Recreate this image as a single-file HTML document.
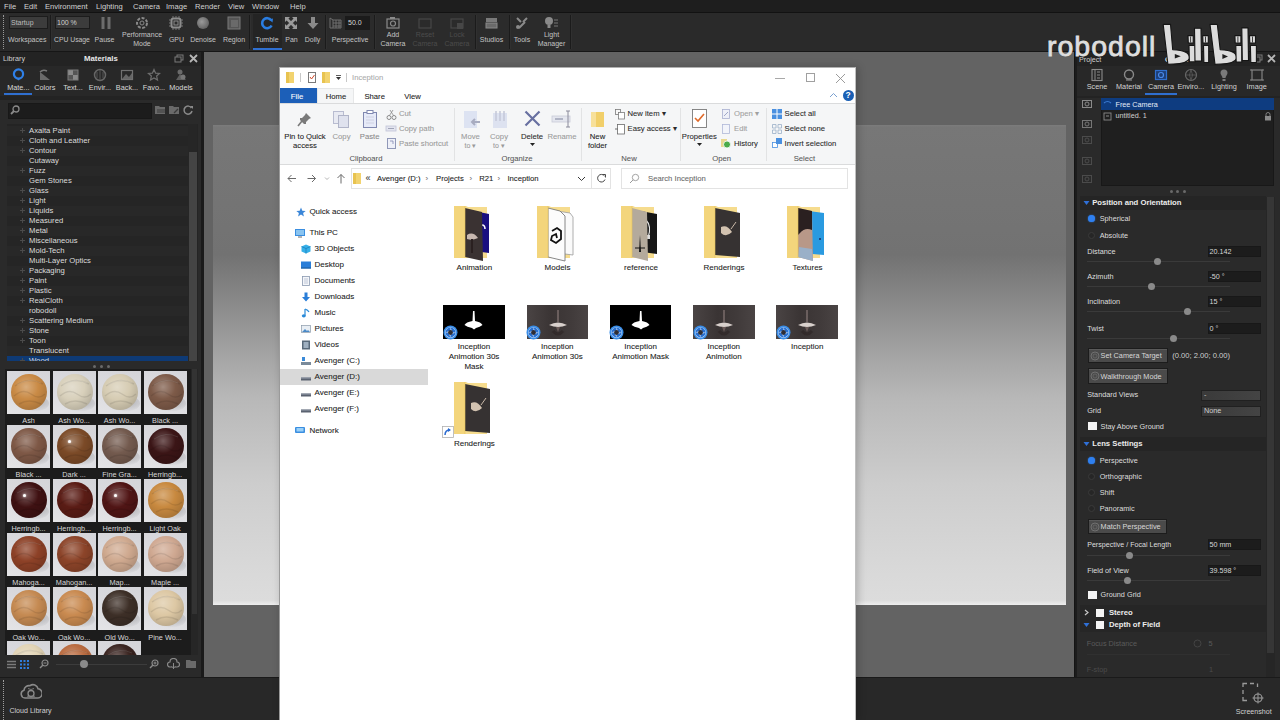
<!DOCTYPE html>
<html><head><meta charset="utf-8">
<style>
*{box-sizing:border-box;margin:0;padding:0}
html,body{width:1280px;height:720px;overflow:hidden;background:#262626;font-family:"Liberation Sans",sans-serif;position:relative}
.a{position:absolute}
.t{position:absolute;white-space:nowrap;line-height:1}
.c{position:absolute;white-space:nowrap;line-height:1;transform:translateX(-50%);text-align:center}
#menu{left:0;top:0;width:1280px;height:12px;background:#1e1e1e}
#menu span{position:absolute;top:2px;font-size:7.6px;color:#d2d2d2}
#tool{left:0;top:12px;width:1280px;height:40px;background:#2a2a2a;border-top:1px solid #121212;border-bottom:1px solid #161616}
.tl{font-size:7px;color:#c4c4c4}
.dis{color:#4c4c4c}
.sep{position:absolute;top:3px;width:2px;height:34px;background:#1b1b1b;border-right:1px solid #303030}
#lp{left:0;top:52px;width:201px;height:625px;background:#2a2a2a}
#vp{left:204px;top:52px;width:871px;height:625px;background:#636363}
#bd{left:213px;top:125px;width:853px;height:480px;background:linear-gradient(#7c7c7c 0px,#777 2px,#727272 27%,#8c8c8c 38%,#a4a4a4 48%,#b8b8b8 57%,#cdcdcd 75%,#d8d8d8 92%,#dcdcdc 99%,#eee 100%)}
#rp{left:1077px;top:52px;width:203px;height:625px;background:#2a2a2a}
#bot{left:0;top:677px;width:1280px;height:43px;background:#282828;border-top:1px solid #1a1a1a}
#ex{left:279px;top:67px;width:577px;height:653px;background:#fff}

.ex{-webkit-text-stroke:0.08px currentColor}
.kl{-webkit-text-stroke:0.15px currentColor}

</style></head><body>
<div id="menu" class="a">
<span style="left:4px">File</span><span style="left:24px">Edit</span><span style="left:45px">Environment</span><span style="left:96px">Lighting</span><span style="left:133px">Camera</span><span style="left:166px">Image</span><span style="left:195px">Render</span><span style="left:228px">View</span><span style="left:252px">Window</span><span style="left:290px">Help</span>
</div>
<div id="tool" class="a"></div>
<div class="a" style="left:3px;top:15px;width:1px;height:34px;border-left:1px dotted #9a9a9a"></div>
<div class="a" style="left:4px;top:13px;width:567px;height:38px;background:#2b2b2b"></div>
<div class="a" style="left:9px;top:16px;width:39px;height:13px;background:#3c3c3c;border:1px solid #1c1c1c"></div>
<div class="t tl" style="left:11px;top:18.5px;color:#bdbdbd">Startup</div>
<div class="t tl" style="left:8px;top:36px">Workspaces</div>
<div class="sep" style="left:50px;top:15px"></div>
<div class="a" style="left:55px;top:16px;width:35px;height:13px;background:#3c3c3c;border:1px solid #1c1c1c"></div>
<div class="t tl" style="left:57px;top:18.5px;color:#d0d0d0">100 %</div>
<div class="t tl" style="left:54px;top:36.8px;font-size:6.8px">CPU Usage</div>
<svg class="a" style="left:99px;top:16px" width="14" height="14"><rect x="2.5" y="1" width="3" height="12" fill="#6c6c6c"/><rect x="8.5" y="1" width="3" height="12" fill="#6c6c6c"/></svg>
<div class="c tl" style="left:104.5px;top:36px">Pause</div>
<svg class="a" style="left:135px;top:16px" width="14" height="14"><circle cx="7" cy="7" r="5" fill="none" stroke="#8a8a8a" stroke-width="2" stroke-dasharray="3 1.5"/><circle cx="7" cy="7" r="2" fill="none" stroke="#8a8a8a" stroke-width="1"/></svg>
<div class="c tl" style="left:142px;top:31px">Performance</div>
<div class="c tl" style="left:142px;top:39.5px">Mode</div>
<svg class="a" style="left:169px;top:16px" width="14" height="14"><rect x="2.5" y="2.5" width="9" height="9" rx="2" fill="none" stroke="#8c8c8c" stroke-width="2"/><rect x="5" y="5" width="4" height="4" fill="none" stroke="#8c8c8c" stroke-width="1"/><path d="M4 0v2M7 0v2M10 0v2M4 12v2M7 12v2M10 12v2M0 4h2M0 7h2M0 10h2M12 4h2M12 7h2M12 10h2" stroke="#777" stroke-width="1"/></svg>
<div class="c tl" style="left:176.5px;top:36px">GPU</div>
<div class="a" style="left:197px;top:17px;width:12px;height:12px;border-radius:50%;background:radial-gradient(circle at 40% 40%,#9a9a9a,#666 70%,#555)"></div>
<div class="c tl" style="left:203px;top:36px">Denoise</div>
<svg class="a" style="left:227px;top:16px" width="14" height="14"><rect x="1" y="1" width="12" height="12" fill="#555" stroke="#7a7a7a" stroke-width="1"/><rect x="4" y="4" width="7" height="7" fill="#6a6a6a"/></svg>
<div class="c tl" style="left:234px;top:36px">Region</div>
<div class="sep" style="left:249px;top:15px"></div>
<div class="a" style="left:253px;top:14px;width:29px;height:36px;background:#242424"></div>
<svg class="a" style="left:260px;top:16px" width="14" height="14"><path d="M11.2 4.2 A5 5 0 1 0 11.6 9.5" fill="none" stroke="#2a7de1" stroke-width="2.6"/><path d="M9 3.5 L13 2.5 L12.5 6.5Z" fill="#2a7de1"/></svg>
<div class="c tl" style="left:267px;top:36px">Tumble</div>
<div class="a" style="left:253px;top:48px;width:29px;height:2px;background:#2f6fd0"></div>
<svg class="a" style="left:284px;top:16px" width="14" height="14"><path d="M2 2L12 12M12 2L2 12" stroke="#9a9a9a" stroke-width="2.5"/><path d="M1 1h5L1 6ZM13 1h-5L13 6ZM1 13h5L1 8ZM13 13h-5L13 8Z" fill="#9a9a9a"/></svg>
<div class="c tl" style="left:291.5px;top:36px">Pan</div>
<svg class="a" style="left:306px;top:16px" width="14" height="14"><path d="M5 1h4v6h3.5L7 13 1.5 7H5Z" fill="#8a8a8a"/></svg>
<div class="c tl" style="left:312.5px;top:36px">Dolly</div>
<div class="sep" style="left:325px;top:15px"></div>
<svg class="a" style="left:329px;top:17px" width="13" height="12"><path d="M1 1v10h11M1 1l3 2v8M4 3h8v8M4 6h8M4 9h8M7 3v8M10 3v8" fill="none" stroke="#6f6f6f" stroke-width="1"/></svg>
<div class="a" style="left:345px;top:16px;width:25px;height:14px;background:#1b1b1b"></div>
<div class="t tl" style="left:348px;top:19px;color:#d8d8d8">50.0</div>
<div class="c tl" style="left:350px;top:36px">Perspective</div>
<div class="sep" style="left:374px;top:15px"></div>
<svg class="a" style="left:386px;top:16px" width="15" height="14"><rect x="1" y="3" width="12" height="9" fill="none" stroke="#8a8a8a" stroke-width="1.2"/><circle cx="7" cy="7.5" r="2.5" fill="none" stroke="#8a8a8a" stroke-width="1.2"/><rect x="4" y="1" width="5" height="2" fill="#8a8a8a"/></svg>
<div class="c tl" style="left:393px;top:31px">Add</div>
<div class="c tl" style="left:393px;top:39.5px">Camera</div>
<svg class="a" style="left:418px;top:16px" width="15" height="14"><rect x="1" y="3" width="12" height="9" fill="none" stroke="#474747" stroke-width="1.2"/></svg>
<div class="c tl dis" style="left:425px;top:31px">Reset</div>
<div class="c tl dis" style="left:425px;top:39.5px">Camera</div>
<svg class="a" style="left:450px;top:16px" width="15" height="14"><rect x="1" y="3" width="12" height="9" fill="none" stroke="#474747" stroke-width="1.2"/><rect x="7" y="7" width="6" height="6" fill="#474747"/></svg>
<div class="c tl dis" style="left:457px;top:31px">Lock</div>
<div class="c tl dis" style="left:457px;top:39.5px">Camera</div>
<div class="sep" style="left:475px;top:15px"></div>
<svg class="a" style="left:484px;top:16px" width="15" height="14"><rect x="2" y="2" width="11" height="4" fill="#7a7a7a"/><rect x="2" y="7" width="11" height="5" fill="#6a6a6a" stroke="#8a8a8a" stroke-width="1"/></svg>
<div class="c tl" style="left:491.5px;top:36px">Studios</div>
<div class="sep" style="left:509px;top:15px"></div>
<svg class="a" style="left:515px;top:16px" width="15" height="14"><path d="M2 2l4 4M12 2l-4 4M4 12l6-6" stroke="#8a8a8a" stroke-width="2"/><circle cx="3" cy="11" r="2" fill="#8a8a8a"/></svg>
<div class="c tl" style="left:522px;top:36px">Tools</div>
<svg class="a" style="left:544px;top:16px" width="15" height="14"><circle cx="5" cy="5" r="4" fill="#8a8a8a"/><rect x="3.5" y="9" width="3" height="3" fill="#8a8a8a"/><path d="M10 4h4M10 7h4M10 10h4" stroke="#777" stroke-width="1"/></svg>
<div class="c tl" style="left:551.5px;top:31px">Light</div>
<div class="c tl" style="left:551.5px;top:39.5px">Manager</div>
<div class="sep" style="left:570px;top:15px"></div>
<div class="a" style="left:0;top:52px;width:201px;height:625px;background:#2a2a2a"></div>
<div class="a" style="left:201px;top:52px;width:3px;height:625px;background:#1a1a1a"></div>
<div class="a" style="left:0;top:52px;width:201px;height:14px;background:#232323"></div>
<div class="t" style="left:3px;top:55px;font-size:7.2px;color:#cfcfcf">Library</div>
<div class="t" style="left:84px;top:54.5px;font-size:7.8px;color:#e8e8e8;font-weight:bold">Materials</div>
<svg class="a" style="left:174px;top:54px" width="10" height="9"><rect x="3" y="1" width="6" height="5" fill="none" stroke="#7a7a7a" stroke-width="1"/><rect x="1" y="3" width="6" height="5" fill="#232323" stroke="#7a7a7a" stroke-width="1"/></svg>
<svg class="a" style="left:189px;top:54px" width="9" height="9"><path d="M1 1L8 8M8 1L1 8" stroke="#b5b5b5" stroke-width="1.8"/></svg>
<div class="a" style="left:0;top:66px;width:201px;height:30px;background:#282828"></div>
<div class="c" style="left:18.3px;top:83.5px;font-size:7.3px;color:#d8d8d8">Mate...</div>
<div class="c" style="left:44.8px;top:83.5px;font-size:7.3px;color:#d8d8d8">Colors</div>
<div class="c" style="left:73px;top:83.5px;font-size:7.3px;color:#d8d8d8">Text...</div>
<div class="c" style="left:100px;top:83.5px;font-size:7.3px;color:#d8d8d8">Envir...</div>
<div class="c" style="left:127px;top:83.5px;font-size:7.3px;color:#d8d8d8">Back...</div>
<div class="c" style="left:154px;top:83.5px;font-size:7.3px;color:#d8d8d8">Favo...</div>
<div class="c" style="left:181px;top:83.5px;font-size:7.3px;color:#d8d8d8">Models</div>
<svg class="a" style="left:11px;top:67px" width="15" height="15"><circle cx="7.5" cy="7" r="4.6" fill="none" stroke="#2f80e8" stroke-width="2.2"/><path d="M5.5 11.5L7.5 13.5L9.5 11.5" fill="#2f80e8"/></svg>
<svg class="a" style="left:38px;top:68px" width="14" height="14"><path d="M2 4L12 12H2Z" fill="#6a6a6a"/><path d="M2 4 Q5 1 9 3" fill="none" stroke="#777" stroke-width="1.5"/></svg>
<svg class="a" style="left:66px;top:68px" width="14" height="14"><rect x="2" y="2" width="5" height="5" fill="#8a8a8a"/><rect x="7" y="2" width="5" height="5" fill="#555"/><rect x="2" y="7" width="5" height="5" fill="#555"/><rect x="7" y="7" width="5" height="5" fill="#8a8a8a"/><rect x="2" y="2" width="10" height="10" fill="none" stroke="#7a7a7a"/></svg>
<svg class="a" style="left:93px;top:68px" width="14" height="14"><circle cx="7" cy="7" r="5.5" fill="none" stroke="#666" stroke-width="1.5"/><path d="M4 4v6M7 2v10M10 4v6" stroke="#555" stroke-width="1"/></svg>
<svg class="a" style="left:120px;top:68px" width="14" height="14"><rect x="1.5" y="2.5" width="11" height="9" fill="none" stroke="#707070" stroke-width="1.2"/><path d="M2 11L6 6L9 9L12 5V11Z" fill="#666"/></svg>
<svg class="a" style="left:147px;top:68px" width="14" height="14"><path d="M7 1.5L8.6 5.2L12.5 5.5L9.6 8L10.5 12L7 10L3.5 12L4.4 8L1.5 5.5L5.4 5.2Z" fill="none" stroke="#6e6e6e" stroke-width="1.2"/></svg>
<svg class="a" style="left:174px;top:68px" width="14" height="14"><circle cx="6" cy="4" r="2.5" fill="#6a6a6a"/><path d="M2 12L6 6L12 12Z" fill="#5e5e5e"/><circle cx="9" cy="9" r="2.5" fill="#777"/></svg>
<div class="a" style="left:4px;top:93px;width:28px;height:2px;background:#2f6fd0"></div>
<div class="a" style="left:0;top:96px;width:201px;height:4px;background:#232323"></div>
<div class="a" style="left:8px;top:103px;width:144px;height:16px;background:#1c1c1c;border:1px solid #181818"></div>
<svg class="a" style="left:9px;top:104px" width="12" height="12"><circle cx="7" cy="5" r="3" fill="none" stroke="#8a8a8a" stroke-width="1.3"/><path d="M5 7L2 10" stroke="#8a8a8a" stroke-width="1.8"/></svg>
<svg class="a" style="left:154px;top:104px" width="13" height="12"><path d="M1 2h4l1 1h5v7H1Z" fill="#6a6a6a"/><path d="M3 6h8M3 8h8" stroke="#3a3a3a" stroke-width="1"/></svg>
<svg class="a" style="left:168px;top:104px" width="13" height="12"><path d="M1 2h4l1 1h5v7H1Z" fill="#6a6a6a"/><path d="M6 9l4-4" stroke="#3a3a3a" stroke-width="1.2"/></svg>
<svg class="a" style="left:182px;top:104px" width="12" height="12"><path d="M9.5 4A4 4 0 1 0 10 7" fill="none" stroke="#8a8a8a" stroke-width="1.5"/><path d="M8 2l3 0 0 3Z" fill="#8a8a8a"/></svg>
<div class="a" style="left:7px;top:124px;width:191px;height:237px;background:#242424;overflow:hidden">
<div class="a" style="left:0;top:1.8px;width:181px;height:10px;background:#282828"></div>
<div class="a" style="left:13px;top:6.3px;width:5px;height:1px;background:#4a4a4a"></div><div class="a" style="left:15px;top:4.3px;width:1px;height:5px;background:#4a4a4a"></div>
<div class="t" style="left:22px;top:3.2px;font-size:7.7px;color:#dcdcdc">Axalta Paint</div>
<div class="a" style="left:0;top:11.8px;width:181px;height:10px;background:#252525"></div>
<div class="a" style="left:13px;top:16.3px;width:5px;height:1px;background:#4a4a4a"></div><div class="a" style="left:15px;top:14.3px;width:1px;height:5px;background:#4a4a4a"></div>
<div class="t" style="left:22px;top:13.2px;font-size:7.7px;color:#dcdcdc">Cloth and Leather</div>
<div class="a" style="left:0;top:21.8px;width:181px;height:10px;background:#282828"></div>
<div class="a" style="left:13px;top:26.3px;width:5px;height:1px;background:#4a4a4a"></div><div class="a" style="left:15px;top:24.3px;width:1px;height:5px;background:#4a4a4a"></div>
<div class="t" style="left:22px;top:23.2px;font-size:7.7px;color:#dcdcdc">Contour</div>
<div class="a" style="left:0;top:31.8px;width:181px;height:10px;background:#252525"></div>
<div class="t" style="left:22px;top:33.2px;font-size:7.7px;color:#dcdcdc">Cutaway</div>
<div class="a" style="left:0;top:41.8px;width:181px;height:10px;background:#282828"></div>
<div class="a" style="left:13px;top:46.3px;width:5px;height:1px;background:#4a4a4a"></div><div class="a" style="left:15px;top:44.3px;width:1px;height:5px;background:#4a4a4a"></div>
<div class="t" style="left:22px;top:43.2px;font-size:7.7px;color:#dcdcdc">Fuzz</div>
<div class="a" style="left:0;top:51.8px;width:181px;height:10px;background:#252525"></div>
<div class="t" style="left:22px;top:53.2px;font-size:7.7px;color:#dcdcdc">Gem Stones</div>
<div class="a" style="left:0;top:61.8px;width:181px;height:10px;background:#282828"></div>
<div class="a" style="left:13px;top:66.3px;width:5px;height:1px;background:#4a4a4a"></div><div class="a" style="left:15px;top:64.3px;width:1px;height:5px;background:#4a4a4a"></div>
<div class="t" style="left:22px;top:63.2px;font-size:7.7px;color:#dcdcdc">Glass</div>
<div class="a" style="left:0;top:71.8px;width:181px;height:10px;background:#252525"></div>
<div class="a" style="left:13px;top:76.3px;width:5px;height:1px;background:#4a4a4a"></div><div class="a" style="left:15px;top:74.3px;width:1px;height:5px;background:#4a4a4a"></div>
<div class="t" style="left:22px;top:73.2px;font-size:7.7px;color:#dcdcdc">Light</div>
<div class="a" style="left:0;top:81.8px;width:181px;height:10px;background:#282828"></div>
<div class="a" style="left:13px;top:86.3px;width:5px;height:1px;background:#4a4a4a"></div><div class="a" style="left:15px;top:84.3px;width:1px;height:5px;background:#4a4a4a"></div>
<div class="t" style="left:22px;top:83.2px;font-size:7.7px;color:#dcdcdc">Liquids</div>
<div class="a" style="left:0;top:91.8px;width:181px;height:10px;background:#252525"></div>
<div class="a" style="left:13px;top:96.3px;width:5px;height:1px;background:#4a4a4a"></div><div class="a" style="left:15px;top:94.3px;width:1px;height:5px;background:#4a4a4a"></div>
<div class="t" style="left:22px;top:93.2px;font-size:7.7px;color:#dcdcdc">Measured</div>
<div class="a" style="left:0;top:101.8px;width:181px;height:10px;background:#282828"></div>
<div class="a" style="left:13px;top:106.3px;width:5px;height:1px;background:#4a4a4a"></div><div class="a" style="left:15px;top:104.3px;width:1px;height:5px;background:#4a4a4a"></div>
<div class="t" style="left:22px;top:103.2px;font-size:7.7px;color:#dcdcdc">Metal</div>
<div class="a" style="left:0;top:111.8px;width:181px;height:10px;background:#252525"></div>
<div class="a" style="left:13px;top:116.3px;width:5px;height:1px;background:#4a4a4a"></div><div class="a" style="left:15px;top:114.3px;width:1px;height:5px;background:#4a4a4a"></div>
<div class="t" style="left:22px;top:113.2px;font-size:7.7px;color:#dcdcdc">Miscellaneous</div>
<div class="a" style="left:0;top:121.8px;width:181px;height:10px;background:#282828"></div>
<div class="a" style="left:13px;top:126.3px;width:5px;height:1px;background:#4a4a4a"></div><div class="a" style="left:15px;top:124.3px;width:1px;height:5px;background:#4a4a4a"></div>
<div class="t" style="left:22px;top:123.2px;font-size:7.7px;color:#dcdcdc">Mold-Tech</div>
<div class="a" style="left:0;top:131.8px;width:181px;height:10px;background:#252525"></div>
<div class="t" style="left:22px;top:133.2px;font-size:7.7px;color:#dcdcdc">Multi-Layer Optics</div>
<div class="a" style="left:0;top:141.8px;width:181px;height:10px;background:#282828"></div>
<div class="a" style="left:13px;top:146.3px;width:5px;height:1px;background:#4a4a4a"></div><div class="a" style="left:15px;top:144.3px;width:1px;height:5px;background:#4a4a4a"></div>
<div class="t" style="left:22px;top:143.2px;font-size:7.7px;color:#dcdcdc">Packaging</div>
<div class="a" style="left:0;top:151.8px;width:181px;height:10px;background:#252525"></div>
<div class="a" style="left:13px;top:156.3px;width:5px;height:1px;background:#4a4a4a"></div><div class="a" style="left:15px;top:154.3px;width:1px;height:5px;background:#4a4a4a"></div>
<div class="t" style="left:22px;top:153.2px;font-size:7.7px;color:#dcdcdc">Paint</div>
<div class="a" style="left:0;top:161.8px;width:181px;height:10px;background:#282828"></div>
<div class="a" style="left:13px;top:166.3px;width:5px;height:1px;background:#4a4a4a"></div><div class="a" style="left:15px;top:164.3px;width:1px;height:5px;background:#4a4a4a"></div>
<div class="t" style="left:22px;top:163.2px;font-size:7.7px;color:#dcdcdc">Plastic</div>
<div class="a" style="left:0;top:171.8px;width:181px;height:10px;background:#252525"></div>
<div class="a" style="left:13px;top:176.3px;width:5px;height:1px;background:#4a4a4a"></div><div class="a" style="left:15px;top:174.3px;width:1px;height:5px;background:#4a4a4a"></div>
<div class="t" style="left:22px;top:173.2px;font-size:7.7px;color:#dcdcdc">RealCloth</div>
<div class="a" style="left:0;top:181.8px;width:181px;height:10px;background:#282828"></div>
<div class="t" style="left:22px;top:183.2px;font-size:7.7px;color:#dcdcdc">robodoll</div>
<div class="a" style="left:0;top:191.8px;width:181px;height:10px;background:#252525"></div>
<div class="a" style="left:13px;top:196.3px;width:5px;height:1px;background:#4a4a4a"></div><div class="a" style="left:15px;top:194.3px;width:1px;height:5px;background:#4a4a4a"></div>
<div class="t" style="left:22px;top:193.2px;font-size:7.7px;color:#dcdcdc">Scattering Medium</div>
<div class="a" style="left:0;top:201.8px;width:181px;height:10px;background:#282828"></div>
<div class="a" style="left:13px;top:206.3px;width:5px;height:1px;background:#4a4a4a"></div><div class="a" style="left:15px;top:204.3px;width:1px;height:5px;background:#4a4a4a"></div>
<div class="t" style="left:22px;top:203.2px;font-size:7.7px;color:#dcdcdc">Stone</div>
<div class="a" style="left:0;top:211.8px;width:181px;height:10px;background:#252525"></div>
<div class="a" style="left:13px;top:216.3px;width:5px;height:1px;background:#4a4a4a"></div><div class="a" style="left:15px;top:214.3px;width:1px;height:5px;background:#4a4a4a"></div>
<div class="t" style="left:22px;top:213.2px;font-size:7.7px;color:#dcdcdc">Toon</div>
<div class="a" style="left:0;top:221.8px;width:181px;height:10px;background:#282828"></div>
<div class="t" style="left:22px;top:223.2px;font-size:7.7px;color:#dcdcdc">Translucent</div>
<div class="a" style="left:0;top:231.8px;width:181px;height:10px;background:#0e3a75"></div>
<div class="a" style="left:13px;top:236.3px;width:5px;height:1px;background:#4a4a4a"></div><div class="a" style="left:15px;top:234.3px;width:1px;height:5px;background:#4a4a4a"></div>
<div class="t" style="left:22px;top:233.2px;font-size:7.7px;color:#dcdcdc">Wood</div>
<div class="a" style="left:181px;top:0;width:9px;height:237px;background:#262626"></div>
<div class="a" style="left:182px;top:28px;width:8px;height:209px;background:#444"></div>
</div>
<div class="a" style="left:93.0px;top:364.5px;width:3px;height:3px;border-radius:50%;background:#6a6a6a"></div>
<div class="a" style="left:99.5px;top:364.5px;width:3px;height:3px;border-radius:50%;background:#6a6a6a"></div>
<div class="a" style="left:106.5px;top:364.5px;width:3px;height:3px;border-radius:50%;background:#6a6a6a"></div>
<div class="a" style="left:5px;top:369px;width:193px;height:286px;background:#1c1c1c;overflow:hidden">
<div class="a" style="left:2.1px;top:2.0px;width:43px;height:43px;background:linear-gradient(200deg,#d4d4d8,#dcdce0 60%,#e4e4e6)"></div>
<div class="a" style="left:10.1px;top:26.0px;width:34px;height:17px;border-radius:50%;background:radial-gradient(ellipse at 60% 40%,rgba(0,0,0,.22),rgba(0,0,0,0) 70%)"></div>
<div class="a" style="left:6.1px;top:5.2px;width:36px;height:36px;border-radius:50%;background:radial-gradient(circle at 42% 36%,rgba(255,255,255,.30),rgba(255,255,255,0) 40%,rgba(0,0,0,.25) 100%),#c98a45"></div>
<svg class="a" style="left:6.1px;top:5.2px" width="36" height="36"><path d="M4 12 Q18 2 32 10 M3 22 Q12 14 20 20 Q28 26 34 20 M8 30 Q18 24 30 30" fill="none" stroke="rgba(0,0,0,.09)" stroke-width="1.5"/><path d="M6 11 Q18 3 30 9" fill="none" stroke="rgba(255,255,255,.12)" stroke-width="1"/></svg>
<div class="c" style="left:23.6px;top:48.3px;font-size:7.3px;color:#d8d8d8">Ash</div>
<div class="a" style="left:47.6px;top:2.0px;width:43px;height:43px;background:linear-gradient(200deg,#d4d4d8,#dcdce0 60%,#e4e4e6)"></div>
<div class="a" style="left:55.6px;top:26.0px;width:34px;height:17px;border-radius:50%;background:radial-gradient(ellipse at 60% 40%,rgba(0,0,0,.22),rgba(0,0,0,0) 70%)"></div>
<div class="a" style="left:51.6px;top:5.2px;width:36px;height:36px;border-radius:50%;background:radial-gradient(circle at 42% 36%,rgba(255,255,255,.30),rgba(255,255,255,0) 40%,rgba(0,0,0,.25) 100%),#d8d0bb"></div>
<svg class="a" style="left:51.6px;top:5.2px" width="36" height="36"><path d="M4 12 Q18 2 32 10 M3 22 Q12 14 20 20 Q28 26 34 20 M8 30 Q18 24 30 30" fill="none" stroke="rgba(0,0,0,.09)" stroke-width="1.5"/><path d="M6 11 Q18 3 30 9" fill="none" stroke="rgba(255,255,255,.12)" stroke-width="1"/></svg>
<div class="c" style="left:69.1px;top:48.3px;font-size:7.3px;color:#d8d8d8">Ash Wo...</div>
<div class="a" style="left:93.1px;top:2.0px;width:43px;height:43px;background:linear-gradient(200deg,#d4d4d8,#dcdce0 60%,#e4e4e6)"></div>
<div class="a" style="left:101.1px;top:26.0px;width:34px;height:17px;border-radius:50%;background:radial-gradient(ellipse at 60% 40%,rgba(0,0,0,.22),rgba(0,0,0,0) 70%)"></div>
<div class="a" style="left:97.1px;top:5.2px;width:36px;height:36px;border-radius:50%;background:radial-gradient(circle at 42% 36%,rgba(255,255,255,.30),rgba(255,255,255,0) 40%,rgba(0,0,0,.25) 100%),#d6ccb3"></div>
<svg class="a" style="left:97.1px;top:5.2px" width="36" height="36"><path d="M4 12 Q18 2 32 10 M3 22 Q12 14 20 20 Q28 26 34 20 M8 30 Q18 24 30 30" fill="none" stroke="rgba(0,0,0,.09)" stroke-width="1.5"/><path d="M6 11 Q18 3 30 9" fill="none" stroke="rgba(255,255,255,.12)" stroke-width="1"/></svg>
<div class="c" style="left:114.6px;top:48.3px;font-size:7.3px;color:#d8d8d8">Ash Wo...</div>
<div class="a" style="left:138.6px;top:2.0px;width:43px;height:43px;background:linear-gradient(200deg,#d4d4d8,#dcdce0 60%,#e4e4e6)"></div>
<div class="a" style="left:146.6px;top:26.0px;width:34px;height:17px;border-radius:50%;background:radial-gradient(ellipse at 60% 40%,rgba(0,0,0,.22),rgba(0,0,0,0) 70%)"></div>
<div class="a" style="left:142.6px;top:5.2px;width:36px;height:36px;border-radius:50%;background:radial-gradient(circle at 42% 36%,rgba(255,255,255,.30),rgba(255,255,255,0) 40%,rgba(0,0,0,.25) 100%),#7d5a48"></div>
<svg class="a" style="left:142.6px;top:5.2px" width="36" height="36"><path d="M4 12 Q18 2 32 10 M3 22 Q12 14 20 20 Q28 26 34 20 M8 30 Q18 24 30 30" fill="none" stroke="rgba(0,0,0,.09)" stroke-width="1.5"/><path d="M6 11 Q18 3 30 9" fill="none" stroke="rgba(255,255,255,.12)" stroke-width="1"/></svg>
<div class="c" style="left:160.1px;top:48.3px;font-size:7.3px;color:#d8d8d8">Black ...</div>
<div class="a" style="left:2.1px;top:56.0px;width:43px;height:43px;background:linear-gradient(200deg,#d4d4d8,#dcdce0 60%,#e4e4e6)"></div>
<div class="a" style="left:10.1px;top:80.0px;width:34px;height:17px;border-radius:50%;background:radial-gradient(ellipse at 60% 40%,rgba(0,0,0,.22),rgba(0,0,0,0) 70%)"></div>
<div class="a" style="left:6.1px;top:59.2px;width:36px;height:36px;border-radius:50%;background:radial-gradient(circle at 42% 36%,rgba(255,255,255,.30),rgba(255,255,255,0) 40%,rgba(0,0,0,.25) 100%),#7e5846"></div>
<svg class="a" style="left:6.1px;top:59.2px" width="36" height="36"><path d="M4 12 Q18 2 32 10 M3 22 Q12 14 20 20 Q28 26 34 20 M8 30 Q18 24 30 30" fill="none" stroke="rgba(0,0,0,.09)" stroke-width="1.5"/><path d="M6 11 Q18 3 30 9" fill="none" stroke="rgba(255,255,255,.12)" stroke-width="1"/></svg>
<div class="c" style="left:23.6px;top:102.3px;font-size:7.3px;color:#d8d8d8">Black ...</div>
<div class="a" style="left:47.6px;top:56.0px;width:43px;height:43px;background:linear-gradient(200deg,#d4d4d8,#dcdce0 60%,#e4e4e6)"></div>
<div class="a" style="left:55.6px;top:80.0px;width:34px;height:17px;border-radius:50%;background:radial-gradient(ellipse at 60% 40%,rgba(0,0,0,.22),rgba(0,0,0,0) 70%)"></div>
<div class="a" style="left:51.6px;top:59.2px;width:36px;height:36px;border-radius:50%;background:radial-gradient(circle at 42% 36%,rgba(255,255,255,.30),rgba(255,255,255,0) 40%,rgba(0,0,0,.25) 100%),#7b4a27"></div>
<svg class="a" style="left:51.6px;top:59.2px" width="36" height="36"><path d="M4 12 Q18 2 32 10 M3 22 Q12 14 20 20 Q28 26 34 20 M8 30 Q18 24 30 30" fill="none" stroke="rgba(0,0,0,.09)" stroke-width="1.5"/><path d="M6 11 Q18 3 30 9" fill="none" stroke="rgba(255,255,255,.12)" stroke-width="1"/></svg>
<div class="a" style="left:63.1px;top:71.0px;width:3px;height:3px;border-radius:50%;background:#fff;box-shadow:0 0 2px #fff"></div>
<div class="c" style="left:69.1px;top:102.3px;font-size:7.3px;color:#d8d8d8">Dark ...</div>
<div class="a" style="left:93.1px;top:56.0px;width:43px;height:43px;background:linear-gradient(200deg,#d4d4d8,#dcdce0 60%,#e4e4e6)"></div>
<div class="a" style="left:101.1px;top:80.0px;width:34px;height:17px;border-radius:50%;background:radial-gradient(ellipse at 60% 40%,rgba(0,0,0,.22),rgba(0,0,0,0) 70%)"></div>
<div class="a" style="left:97.1px;top:59.2px;width:36px;height:36px;border-radius:50%;background:radial-gradient(circle at 42% 36%,rgba(255,255,255,.30),rgba(255,255,255,0) 40%,rgba(0,0,0,.25) 100%),#735a4e"></div>
<svg class="a" style="left:97.1px;top:59.2px" width="36" height="36"><path d="M4 12 Q18 2 32 10 M3 22 Q12 14 20 20 Q28 26 34 20 M8 30 Q18 24 30 30" fill="none" stroke="rgba(0,0,0,.09)" stroke-width="1.5"/><path d="M6 11 Q18 3 30 9" fill="none" stroke="rgba(255,255,255,.12)" stroke-width="1"/></svg>
<div class="c" style="left:114.6px;top:102.3px;font-size:7.3px;color:#d8d8d8">Fine Gra...</div>
<div class="a" style="left:138.6px;top:56.0px;width:43px;height:43px;background:linear-gradient(200deg,#d4d4d8,#dcdce0 60%,#e4e4e6)"></div>
<div class="a" style="left:146.6px;top:80.0px;width:34px;height:17px;border-radius:50%;background:radial-gradient(ellipse at 60% 40%,rgba(0,0,0,.22),rgba(0,0,0,0) 70%)"></div>
<div class="a" style="left:142.6px;top:59.2px;width:36px;height:36px;border-radius:50%;background:radial-gradient(circle at 42% 36%,rgba(255,255,255,.30),rgba(255,255,255,0) 40%,rgba(0,0,0,.25) 100%),#3b1516"></div>
<svg class="a" style="left:142.6px;top:59.2px" width="36" height="36"><path d="M4 12 Q18 2 32 10 M3 22 Q12 14 20 20 Q28 26 34 20 M8 30 Q18 24 30 30" fill="none" stroke="rgba(0,0,0,.09)" stroke-width="1.5"/><path d="M6 11 Q18 3 30 9" fill="none" stroke="rgba(255,255,255,.12)" stroke-width="1"/></svg>
<div class="c" style="left:160.1px;top:102.3px;font-size:7.3px;color:#d8d8d8">Herringb...</div>
<div class="a" style="left:2.1px;top:110.1px;width:43px;height:43px;background:linear-gradient(200deg,#d4d4d8,#dcdce0 60%,#e4e4e6)"></div>
<div class="a" style="left:10.1px;top:134.1px;width:34px;height:17px;border-radius:50%;background:radial-gradient(ellipse at 60% 40%,rgba(0,0,0,.22),rgba(0,0,0,0) 70%)"></div>
<div class="a" style="left:6.1px;top:113.3px;width:36px;height:36px;border-radius:50%;background:radial-gradient(circle at 42% 36%,rgba(255,255,255,.30),rgba(255,255,255,0) 40%,rgba(0,0,0,.25) 100%),#3f1112"></div>
<svg class="a" style="left:6.1px;top:113.3px" width="36" height="36"><path d="M4 12 Q18 2 32 10 M3 22 Q12 14 20 20 Q28 26 34 20 M8 30 Q18 24 30 30" fill="none" stroke="rgba(0,0,0,.09)" stroke-width="1.5"/><path d="M6 11 Q18 3 30 9" fill="none" stroke="rgba(255,255,255,.12)" stroke-width="1"/></svg>
<div class="a" style="left:17.6px;top:125.1px;width:3px;height:3px;border-radius:50%;background:#fff;box-shadow:0 0 2px #fff"></div>
<div class="c" style="left:23.6px;top:156.4px;font-size:7.3px;color:#d8d8d8">Herringb...</div>
<div class="a" style="left:47.6px;top:110.1px;width:43px;height:43px;background:linear-gradient(200deg,#d4d4d8,#dcdce0 60%,#e4e4e6)"></div>
<div class="a" style="left:55.6px;top:134.1px;width:34px;height:17px;border-radius:50%;background:radial-gradient(ellipse at 60% 40%,rgba(0,0,0,.22),rgba(0,0,0,0) 70%)"></div>
<div class="a" style="left:51.6px;top:113.3px;width:36px;height:36px;border-radius:50%;background:radial-gradient(circle at 42% 36%,rgba(255,255,255,.30),rgba(255,255,255,0) 40%,rgba(0,0,0,.25) 100%),#5a1c15"></div>
<svg class="a" style="left:51.6px;top:113.3px" width="36" height="36"><path d="M4 12 Q18 2 32 10 M3 22 Q12 14 20 20 Q28 26 34 20 M8 30 Q18 24 30 30" fill="none" stroke="rgba(0,0,0,.09)" stroke-width="1.5"/><path d="M6 11 Q18 3 30 9" fill="none" stroke="rgba(255,255,255,.12)" stroke-width="1"/></svg>
<div class="c" style="left:69.1px;top:156.4px;font-size:7.3px;color:#d8d8d8">Herringb...</div>
<div class="a" style="left:93.1px;top:110.1px;width:43px;height:43px;background:linear-gradient(200deg,#d4d4d8,#dcdce0 60%,#e4e4e6)"></div>
<div class="a" style="left:101.1px;top:134.1px;width:34px;height:17px;border-radius:50%;background:radial-gradient(ellipse at 60% 40%,rgba(0,0,0,.22),rgba(0,0,0,0) 70%)"></div>
<div class="a" style="left:97.1px;top:113.3px;width:36px;height:36px;border-radius:50%;background:radial-gradient(circle at 42% 36%,rgba(255,255,255,.30),rgba(255,255,255,0) 40%,rgba(0,0,0,.25) 100%),#501515"></div>
<svg class="a" style="left:97.1px;top:113.3px" width="36" height="36"><path d="M4 12 Q18 2 32 10 M3 22 Q12 14 20 20 Q28 26 34 20 M8 30 Q18 24 30 30" fill="none" stroke="rgba(0,0,0,.09)" stroke-width="1.5"/><path d="M6 11 Q18 3 30 9" fill="none" stroke="rgba(255,255,255,.12)" stroke-width="1"/></svg>
<div class="a" style="left:108.6px;top:125.1px;width:3px;height:3px;border-radius:50%;background:#fff;box-shadow:0 0 2px #fff"></div>
<div class="c" style="left:114.6px;top:156.4px;font-size:7.3px;color:#d8d8d8">Herringb...</div>
<div class="a" style="left:138.6px;top:110.1px;width:43px;height:43px;background:linear-gradient(200deg,#d4d4d8,#dcdce0 60%,#e4e4e6)"></div>
<div class="a" style="left:146.6px;top:134.1px;width:34px;height:17px;border-radius:50%;background:radial-gradient(ellipse at 60% 40%,rgba(0,0,0,.22),rgba(0,0,0,0) 70%)"></div>
<div class="a" style="left:142.6px;top:113.3px;width:36px;height:36px;border-radius:50%;background:radial-gradient(circle at 42% 36%,rgba(255,255,255,.30),rgba(255,255,255,0) 40%,rgba(0,0,0,.25) 100%),#c8893f"></div>
<svg class="a" style="left:142.6px;top:113.3px" width="36" height="36"><path d="M4 12 Q18 2 32 10 M3 22 Q12 14 20 20 Q28 26 34 20 M8 30 Q18 24 30 30" fill="none" stroke="rgba(0,0,0,.09)" stroke-width="1.5"/><path d="M6 11 Q18 3 30 9" fill="none" stroke="rgba(255,255,255,.12)" stroke-width="1"/></svg>
<div class="c" style="left:160.1px;top:156.4px;font-size:7.3px;color:#d8d8d8">Light Oak</div>
<div class="a" style="left:2.1px;top:164.1px;width:43px;height:43px;background:linear-gradient(200deg,#d4d4d8,#dcdce0 60%,#e4e4e6)"></div>
<div class="a" style="left:10.1px;top:188.1px;width:34px;height:17px;border-radius:50%;background:radial-gradient(ellipse at 60% 40%,rgba(0,0,0,.22),rgba(0,0,0,0) 70%)"></div>
<div class="a" style="left:6.1px;top:167.3px;width:36px;height:36px;border-radius:50%;background:radial-gradient(circle at 42% 36%,rgba(255,255,255,.30),rgba(255,255,255,0) 40%,rgba(0,0,0,.25) 100%),#8d4127"></div>
<svg class="a" style="left:6.1px;top:167.3px" width="36" height="36"><path d="M4 12 Q18 2 32 10 M3 22 Q12 14 20 20 Q28 26 34 20 M8 30 Q18 24 30 30" fill="none" stroke="rgba(0,0,0,.09)" stroke-width="1.5"/><path d="M6 11 Q18 3 30 9" fill="none" stroke="rgba(255,255,255,.12)" stroke-width="1"/></svg>
<div class="c" style="left:23.6px;top:210.4px;font-size:7.3px;color:#d8d8d8">Mahoga...</div>
<div class="a" style="left:47.6px;top:164.1px;width:43px;height:43px;background:linear-gradient(200deg,#d4d4d8,#dcdce0 60%,#e4e4e6)"></div>
<div class="a" style="left:55.6px;top:188.1px;width:34px;height:17px;border-radius:50%;background:radial-gradient(ellipse at 60% 40%,rgba(0,0,0,.22),rgba(0,0,0,0) 70%)"></div>
<div class="a" style="left:51.6px;top:167.3px;width:36px;height:36px;border-radius:50%;background:radial-gradient(circle at 42% 36%,rgba(255,255,255,.30),rgba(255,255,255,0) 40%,rgba(0,0,0,.25) 100%),#8c4429"></div>
<svg class="a" style="left:51.6px;top:167.3px" width="36" height="36"><path d="M4 12 Q18 2 32 10 M3 22 Q12 14 20 20 Q28 26 34 20 M8 30 Q18 24 30 30" fill="none" stroke="rgba(0,0,0,.09)" stroke-width="1.5"/><path d="M6 11 Q18 3 30 9" fill="none" stroke="rgba(255,255,255,.12)" stroke-width="1"/></svg>
<div class="c" style="left:69.1px;top:210.4px;font-size:7.3px;color:#d8d8d8">Mahogan...</div>
<div class="a" style="left:93.1px;top:164.1px;width:43px;height:43px;background:linear-gradient(200deg,#d4d4d8,#dcdce0 60%,#e4e4e6)"></div>
<div class="a" style="left:101.1px;top:188.1px;width:34px;height:17px;border-radius:50%;background:radial-gradient(ellipse at 60% 40%,rgba(0,0,0,.22),rgba(0,0,0,0) 70%)"></div>
<div class="a" style="left:97.1px;top:167.3px;width:36px;height:36px;border-radius:50%;background:radial-gradient(circle at 42% 36%,rgba(255,255,255,.30),rgba(255,255,255,0) 40%,rgba(0,0,0,.25) 100%),#cfa98f"></div>
<svg class="a" style="left:97.1px;top:167.3px" width="36" height="36"><path d="M4 12 Q18 2 32 10 M3 22 Q12 14 20 20 Q28 26 34 20 M8 30 Q18 24 30 30" fill="none" stroke="rgba(0,0,0,.09)" stroke-width="1.5"/><path d="M6 11 Q18 3 30 9" fill="none" stroke="rgba(255,255,255,.12)" stroke-width="1"/></svg>
<div class="c" style="left:114.6px;top:210.4px;font-size:7.3px;color:#d8d8d8">Map...</div>
<div class="a" style="left:138.6px;top:164.1px;width:43px;height:43px;background:linear-gradient(200deg,#d4d4d8,#dcdce0 60%,#e4e4e6)"></div>
<div class="a" style="left:146.6px;top:188.1px;width:34px;height:17px;border-radius:50%;background:radial-gradient(ellipse at 60% 40%,rgba(0,0,0,.22),rgba(0,0,0,0) 70%)"></div>
<div class="a" style="left:142.6px;top:167.3px;width:36px;height:36px;border-radius:50%;background:radial-gradient(circle at 42% 36%,rgba(255,255,255,.30),rgba(255,255,255,0) 40%,rgba(0,0,0,.25) 100%),#cfa891"></div>
<svg class="a" style="left:142.6px;top:167.3px" width="36" height="36"><path d="M4 12 Q18 2 32 10 M3 22 Q12 14 20 20 Q28 26 34 20 M8 30 Q18 24 30 30" fill="none" stroke="rgba(0,0,0,.09)" stroke-width="1.5"/><path d="M6 11 Q18 3 30 9" fill="none" stroke="rgba(255,255,255,.12)" stroke-width="1"/></svg>
<div class="c" style="left:160.1px;top:210.4px;font-size:7.3px;color:#d8d8d8">Maple ...</div>
<div class="a" style="left:2.1px;top:218.2px;width:43px;height:43px;background:linear-gradient(200deg,#d4d4d8,#dcdce0 60%,#e4e4e6)"></div>
<div class="a" style="left:10.1px;top:242.2px;width:34px;height:17px;border-radius:50%;background:radial-gradient(ellipse at 60% 40%,rgba(0,0,0,.22),rgba(0,0,0,0) 70%)"></div>
<div class="a" style="left:6.1px;top:221.4px;width:36px;height:36px;border-radius:50%;background:radial-gradient(circle at 42% 36%,rgba(255,255,255,.30),rgba(255,255,255,0) 40%,rgba(0,0,0,.25) 100%),#c58a52"></div>
<svg class="a" style="left:6.1px;top:221.4px" width="36" height="36"><path d="M4 12 Q18 2 32 10 M3 22 Q12 14 20 20 Q28 26 34 20 M8 30 Q18 24 30 30" fill="none" stroke="rgba(0,0,0,.09)" stroke-width="1.5"/><path d="M6 11 Q18 3 30 9" fill="none" stroke="rgba(255,255,255,.12)" stroke-width="1"/></svg>
<div class="c" style="left:23.6px;top:264.5px;font-size:7.3px;color:#d8d8d8">Oak Wo...</div>
<div class="a" style="left:47.6px;top:218.2px;width:43px;height:43px;background:linear-gradient(200deg,#d4d4d8,#dcdce0 60%,#e4e4e6)"></div>
<div class="a" style="left:55.6px;top:242.2px;width:34px;height:17px;border-radius:50%;background:radial-gradient(ellipse at 60% 40%,rgba(0,0,0,.22),rgba(0,0,0,0) 70%)"></div>
<div class="a" style="left:51.6px;top:221.4px;width:36px;height:36px;border-radius:50%;background:radial-gradient(circle at 42% 36%,rgba(255,255,255,.30),rgba(255,255,255,0) 40%,rgba(0,0,0,.25) 100%),#c98a50"></div>
<svg class="a" style="left:51.6px;top:221.4px" width="36" height="36"><path d="M4 12 Q18 2 32 10 M3 22 Q12 14 20 20 Q28 26 34 20 M8 30 Q18 24 30 30" fill="none" stroke="rgba(0,0,0,.09)" stroke-width="1.5"/><path d="M6 11 Q18 3 30 9" fill="none" stroke="rgba(255,255,255,.12)" stroke-width="1"/></svg>
<div class="c" style="left:69.1px;top:264.5px;font-size:7.3px;color:#d8d8d8">Oak Wo...</div>
<div class="a" style="left:93.1px;top:218.2px;width:43px;height:43px;background:linear-gradient(200deg,#d4d4d8,#dcdce0 60%,#e4e4e6)"></div>
<div class="a" style="left:101.1px;top:242.2px;width:34px;height:17px;border-radius:50%;background:radial-gradient(ellipse at 60% 40%,rgba(0,0,0,.22),rgba(0,0,0,0) 70%)"></div>
<div class="a" style="left:97.1px;top:221.4px;width:36px;height:36px;border-radius:50%;background:radial-gradient(circle at 42% 36%,rgba(255,255,255,.30),rgba(255,255,255,0) 40%,rgba(0,0,0,.25) 100%),#3d2f27"></div>
<svg class="a" style="left:97.1px;top:221.4px" width="36" height="36"><path d="M4 12 Q18 2 32 10 M3 22 Q12 14 20 20 Q28 26 34 20 M8 30 Q18 24 30 30" fill="none" stroke="rgba(0,0,0,.09)" stroke-width="1.5"/><path d="M6 11 Q18 3 30 9" fill="none" stroke="rgba(255,255,255,.12)" stroke-width="1"/></svg>
<div class="c" style="left:114.6px;top:264.5px;font-size:7.3px;color:#d8d8d8">Old Wo...</div>
<div class="a" style="left:138.6px;top:218.2px;width:43px;height:43px;background:linear-gradient(200deg,#d4d4d8,#dcdce0 60%,#e4e4e6)"></div>
<div class="a" style="left:146.6px;top:242.2px;width:34px;height:17px;border-radius:50%;background:radial-gradient(ellipse at 60% 40%,rgba(0,0,0,.22),rgba(0,0,0,0) 70%)"></div>
<div class="a" style="left:142.6px;top:221.4px;width:36px;height:36px;border-radius:50%;background:radial-gradient(circle at 42% 36%,rgba(255,255,255,.30),rgba(255,255,255,0) 40%,rgba(0,0,0,.25) 100%),#ddc8a4"></div>
<svg class="a" style="left:142.6px;top:221.4px" width="36" height="36"><path d="M4 12 Q18 2 32 10 M3 22 Q12 14 20 20 Q28 26 34 20 M8 30 Q18 24 30 30" fill="none" stroke="rgba(0,0,0,.09)" stroke-width="1.5"/><path d="M6 11 Q18 3 30 9" fill="none" stroke="rgba(255,255,255,.12)" stroke-width="1"/></svg>
<div class="c" style="left:160.1px;top:264.5px;font-size:7.3px;color:#d8d8d8">Pine Wo...</div>
<div class="a" style="left:2.1px;top:272.2px;width:43px;height:43px;background:linear-gradient(200deg,#d4d4d8,#dcdce0 60%,#e4e4e6)"></div>
<div class="a" style="left:10.1px;top:296.2px;width:34px;height:17px;border-radius:50%;background:radial-gradient(ellipse at 60% 40%,rgba(0,0,0,.22),rgba(0,0,0,0) 70%)"></div>
<div class="a" style="left:6.1px;top:275.4px;width:36px;height:36px;border-radius:50%;background:radial-gradient(circle at 42% 36%,rgba(255,255,255,.30),rgba(255,255,255,0) 40%,rgba(0,0,0,.25) 100%),#e2d4b6"></div>
<svg class="a" style="left:6.1px;top:275.4px" width="36" height="36"><path d="M4 12 Q18 2 32 10 M3 22 Q12 14 20 20 Q28 26 34 20 M8 30 Q18 24 30 30" fill="none" stroke="rgba(0,0,0,.09)" stroke-width="1.5"/><path d="M6 11 Q18 3 30 9" fill="none" stroke="rgba(255,255,255,.12)" stroke-width="1"/></svg>
<div class="a" style="left:47.6px;top:272.2px;width:43px;height:43px;background:linear-gradient(200deg,#d4d4d8,#dcdce0 60%,#e4e4e6)"></div>
<div class="a" style="left:55.6px;top:296.2px;width:34px;height:17px;border-radius:50%;background:radial-gradient(ellipse at 60% 40%,rgba(0,0,0,.22),rgba(0,0,0,0) 70%)"></div>
<div class="a" style="left:51.6px;top:275.4px;width:36px;height:36px;border-radius:50%;background:radial-gradient(circle at 42% 36%,rgba(255,255,255,.30),rgba(255,255,255,0) 40%,rgba(0,0,0,.25) 100%),#b96b40"></div>
<svg class="a" style="left:51.6px;top:275.4px" width="36" height="36"><path d="M4 12 Q18 2 32 10 M3 22 Q12 14 20 20 Q28 26 34 20 M8 30 Q18 24 30 30" fill="none" stroke="rgba(0,0,0,.09)" stroke-width="1.5"/><path d="M6 11 Q18 3 30 9" fill="none" stroke="rgba(255,255,255,.12)" stroke-width="1"/></svg>
<div class="a" style="left:93.1px;top:272.2px;width:43px;height:43px;background:linear-gradient(200deg,#d4d4d8,#dcdce0 60%,#e4e4e6)"></div>
<div class="a" style="left:101.1px;top:296.2px;width:34px;height:17px;border-radius:50%;background:radial-gradient(ellipse at 60% 40%,rgba(0,0,0,.22),rgba(0,0,0,0) 70%)"></div>
<div class="a" style="left:97.1px;top:275.4px;width:36px;height:36px;border-radius:50%;background:radial-gradient(circle at 42% 36%,rgba(255,255,255,.30),rgba(255,255,255,0) 40%,rgba(0,0,0,.25) 100%),#3a2420"></div>
<svg class="a" style="left:97.1px;top:275.4px" width="36" height="36"><path d="M4 12 Q18 2 32 10 M3 22 Q12 14 20 20 Q28 26 34 20 M8 30 Q18 24 30 30" fill="none" stroke="rgba(0,0,0,.09)" stroke-width="1.5"/><path d="M6 11 Q18 3 30 9" fill="none" stroke="rgba(255,255,255,.12)" stroke-width="1"/></svg>
<div class="a" style="left:186px;top:0;width:7px;height:286px;background:#262626"></div>
<div class="a" style="left:187px;top:0;width:5px;height:245px;background:#333"></div>
</div>
<div class="a" style="left:0;top:655px;width:201px;height:22px;background:#2a2a2a"></div>
<svg class="a" style="left:7px;top:660px" width="10" height="9"><path d="M0 1.5h9M0 4.5h9M0 7.5h9" stroke="#7a7a7a" stroke-width="1.3"/></svg>
<svg class="a" style="left:20px;top:660px" width="9" height="9"><path d="M0 0h2v2H0zM3.5 0h2v2h-2zM7 0h2v2H7zM0 3.5h2v2H0zM3.5 3.5h2v2h-2zM7 3.5h2v2H7zM0 7h2v2H0zM3.5 7h2v2h-2zM7 7h2v2H7z" fill="#2f7de0"/></svg>
<svg class="a" style="left:39px;top:659px" width="10" height="10"><circle cx="6" cy="4" r="3" fill="none" stroke="#8a8a8a" stroke-width="1.2"/><path d="M4 6L1 9" stroke="#8a8a8a" stroke-width="1.5"/><path d="M4.5 4h3" stroke="#8a8a8a"/></svg>
<div class="a" style="left:56px;top:663.5px;width:91px;height:1px;background:#3c3c3c"></div>
<div class="a" style="left:80px;top:660px;width:8px;height:8px;border-radius:50%;background:#8a8a8a"></div>
<svg class="a" style="left:149px;top:659px" width="10" height="10"><circle cx="6" cy="4" r="3" fill="none" stroke="#8a8a8a" stroke-width="1.2"/><path d="M4 6L1 9" stroke="#8a8a8a" stroke-width="1.5"/><path d="M4.5 4h3M6 2.5v3" stroke="#8a8a8a"/></svg>
<svg class="a" style="left:167px;top:658px" width="13" height="12"><path d="M3 9a2.5 2.5 0 0 1 0-5a3.5 3.5 0 0 1 7 0a2.5 2.5 0 0 1 0 5Z" fill="none" stroke="#8a8a8a" stroke-width="1.2"/><path d="M6.5 5v6M4.5 8l2 2 2-2" stroke="#8a8a8a" stroke-width="1"/></svg>
<svg class="a" style="left:185px;top:658px" width="13" height="12"><path d="M1 2h4l1 1h5v7H1Z" fill="#6a6a6a"/></svg><div id="vp" class="a"></div>
<div id="bd" class="a"></div>
<div id="bot" class="a"></div>
<div class="a" style="left:1073.5px;top:52px;width:3px;height:625px;background:#141414"></div>
<div class="a" style="left:1075px;top:52px;width:205px;height:625px;background:#2a2a2a;border-left:2px solid #1c1c1c"></div>
<div class="a" style="left:1077px;top:52px;width:203px;height:14px;background:#232323"></div>
<div class="t" style="left:1079px;top:55.97px;font-size:7.2px;color:#d0d0d0;">Project</div>
<div class="t" style="left:1165px;top:55.63px;font-size:7.8px;color:#e8e8e8;font-weight:bold">Camera</div>
<svg class="a" style="left:1253px;top:54px" width="10" height="9"><rect x="3" y="1" width="6" height="5" fill="none" stroke="#7a7a7a" stroke-width="1"/><rect x="1" y="3" width="6" height="5" fill="#232323" stroke="#7a7a7a" stroke-width="1"/></svg>
<svg class="a" style="left:1267px;top:54px" width="9" height="9"><path d="M1 1L8 8M8 1L1 8" stroke="#b5b5b5" stroke-width="1.8"/></svg>
<div class="a" style="left:1077px;top:66px;width:203px;height:30px;background:#282828"></div>
<div class="c" style="left:1097px;top:83.41px;font-size:7.3px;color:#d2d2d2;">Scene</div>
<div class="c" style="left:1129px;top:83.41px;font-size:7.3px;color:#d2d2d2;">Material</div>
<div class="c" style="left:1161px;top:83.41px;font-size:7.3px;color:#d2d2d2;">Camera</div>
<div class="c" style="left:1190.8px;top:83.41px;font-size:7.3px;color:#d2d2d2;">Enviro...</div>
<div class="c" style="left:1224px;top:83.41px;font-size:7.3px;color:#d2d2d2;">Lighting</div>
<div class="c" style="left:1256.7px;top:83.41px;font-size:7.3px;color:#d2d2d2;">Image</div>
<svg class="a" style="left:1090px;top:68px" width="14" height="14"><rect x="2" y="1.5" width="10" height="11" fill="none" stroke="#8a8a8a" stroke-width="1.1"/><path d="M5 1.5v11M7 4h3M7 7h3M7 10h3" stroke="#8a8a8a" stroke-width="1"/></svg>
<svg class="a" style="left:1122px;top:68px" width="14" height="14"><circle cx="7" cy="6.5" r="4.5" fill="none" stroke="#8a8a8a" stroke-width="1.4"/><path d="M4 12h6" stroke="#8a8a8a" stroke-width="1.2"/></svg>
<svg class="a" style="left:1154px;top:68px" width="14" height="14"><rect x="1.5" y="2.5" width="11" height="9" fill="#1d3f78" stroke="#2f6fd0" stroke-width="1.2"/><circle cx="7" cy="7" r="2.5" fill="none" stroke="#4a8ae8" stroke-width="1.2"/></svg>
<svg class="a" style="left:1184px;top:68px" width="14" height="14"><circle cx="7" cy="7" r="5.5" fill="none" stroke="#6a6a6a" stroke-width="1.2"/><path d="M1.5 7h11M7 1.5q-3 5.5 0 11M7 1.5q3 5.5 0 11" fill="none" stroke="#5a5a5a" stroke-width=".8"/></svg>
<svg class="a" style="left:1217px;top:68px" width="14" height="14"><path d="M7 1.5a3.5 3.5 0 0 1 3.5 3.5c0 2-2 3-2 5h-3c0-2-2-3-2-5A3.5 3.5 0 0 1 7 1.5Z" fill="#7a7a7a"/><rect x="5.5" y="11" width="3" height="2" fill="#7a7a7a"/></svg>
<svg class="a" style="left:1250px;top:68px" width="14" height="14"><rect x="2" y="2" width="10" height="10" fill="none" stroke="#8a8a8a" stroke-width="1.1"/><path d="M0 2h2M12 2h2M0 12h2M12 12h2" stroke="#8a8a8a"/></svg>
<div class="a" style="left:1145px;top:93px;width:32px;height:2px;background:#2f6fd0"></div>
<div class="a" style="left:1077px;top:96px;width:203px;height:2px;background:#232323"></div>
<div class="a" style="left:1101px;top:97.8px;width:173px;height:88px;background:#1f1f1f;border:1px solid #181818"></div>
<div class="a" style="left:1101px;top:97.8px;width:173px;height:12.7px;background:#0e3c80"></div>
<svg class="a" style="left:1103px;top:99px" width="9" height="9"><path d="M1 4q3.5-3 7 0" fill="none" stroke="#3a7ad0" stroke-width="1.2"/></svg>
<div class="t" style="left:1115.5px;top:100.97px;font-size:7.2px;color:#e4ecf8;">Free Camera</div>
<svg class="a" style="left:1103px;top:111.5px" width="9" height="9"><rect x="1" y="1" width="7" height="7" fill="none" stroke="#8a8a8a" stroke-width=".9"/><path d="M3 4h3" stroke="#8a8a8a"/></svg>
<div class="t" style="left:1115.5px;top:112.47px;font-size:7.2px;color:#d0d0d0;">untitled. 1</div>
<svg class="a" style="left:1264px;top:111.5px" width="8" height="9"><path d="M2 4V2.5a2 2 0 0 1 4 0V4" fill="none" stroke="#8a8a8a" stroke-width=".9"/><rect x="1" y="4" width="6" height="4.5" fill="#8a8a8a"/></svg>
<svg class="a" style="left:1081px;top:98px;opacity:1" width="12" height="12"><rect x="1.5" y="2.5" width="9" height="7" fill="none" stroke="#8a8a8a" stroke-width="1"/><circle cx="6" cy="6" r="2" fill="none" stroke="#8a8a8a" stroke-width="1"/></svg>
<svg class="a" style="left:1081px;top:117.6px;opacity:0.8" width="12" height="12"><rect x="1.5" y="2.5" width="9" height="7" fill="none" stroke="#8a8a8a" stroke-width="1"/><circle cx="6" cy="6" r="2" fill="none" stroke="#8a8a8a" stroke-width="1"/></svg>
<svg class="a" style="left:1081px;top:134px;opacity:0.35" width="12" height="12"><rect x="1.5" y="2.5" width="9" height="7" fill="none" stroke="#8a8a8a" stroke-width="1"/><circle cx="6" cy="6" r="2" fill="none" stroke="#8a8a8a" stroke-width="1"/></svg>
<svg class="a" style="left:1081px;top:155px;opacity:0.35" width="12" height="12"><rect x="1.5" y="2.5" width="9" height="7" fill="none" stroke="#8a8a8a" stroke-width="1"/><circle cx="6" cy="6" r="2" fill="none" stroke="#8a8a8a" stroke-width="1"/></svg>
<svg class="a" style="left:1081px;top:173px;opacity:0.35" width="12" height="12"><rect x="1.5" y="2.5" width="9" height="7" fill="none" stroke="#8a8a8a" stroke-width="1"/><circle cx="6" cy="6" r="2" fill="none" stroke="#8a8a8a" stroke-width="1"/></svg>
<div class="a" style="left:1169.9px;top:190.2px;width:3px;height:3px;border-radius:50%;background:#6a6a6a"></div>
<div class="a" style="left:1176.3px;top:190.2px;width:3px;height:3px;border-radius:50%;background:#6a6a6a"></div>
<div class="a" style="left:1182.9px;top:190.2px;width:3px;height:3px;border-radius:50%;background:#6a6a6a"></div>
<div class="a" style="left:1266px;top:197px;width:9px;height:480px;background:#262626"></div>
<div class="a" style="left:1267px;top:197px;width:7px;height:456px;background:#363636"></div>
<div class="a" style="left:1080px;top:195.8px;width:186px;height:14px;background:#252525"></div>
<svg class="a" style="left:1083px;top:199.8px" width="7" height="6"><path d="M0.5 1h6L3.5 5Z" fill="#2f70d8"/></svg>
<div class="t" style="left:1092.2px;top:198.99px;font-size:7.7px;color:#ececec;font-weight:bold">Position and Orientation</div>
<div class="a" style="left:1088.1000000000001px;top:215.3px;width:7.2px;height:7.2px;border-radius:50%;background:#2f80f0;box-shadow:0 0 1.5px #2f80f0"></div>
<div class="t" style="left:1099.7px;top:215.31px;font-size:7.3px;color:#dedede;">Spherical</div>
<div class="a" style="left:1088.1000000000001px;top:231.70000000000002px;width:7.2px;height:7.2px;border-radius:50%;background:#262626;border:1px solid #3a3a3a"></div>
<div class="t" style="left:1099.7px;top:231.71px;font-size:7.3px;color:#dedede;">Absolute</div>
<div class="t" style="left:1087.2px;top:248.11px;font-size:7.3px;color:#dedede;">Distance</div>
<div class="a" style="left:1207.5px;top:245.9px;width:53px;height:11px;background:#1c1c1c;border:1px solid #181818"></div>
<div class="t" style="left:1209.4px;top:247.87px;font-size:7.2px;color:#d8d8d8;">20.142</div>
<div class="a" style="left:1087px;top:260.9px;width:143px;height:1px;background:#3a3a3a"></div>
<div class="a" style="left:1154.3px;top:257.9px;width:7px;height:7px;border-radius:50%;background:#8a8a8a"></div>
<div class="t" style="left:1087.2px;top:273.11px;font-size:7.3px;color:#dedede;">Azimuth</div>
<div class="a" style="left:1207.5px;top:270.9px;width:53px;height:11px;background:#1c1c1c;border:1px solid #181818"></div>
<div class="t" style="left:1209.4px;top:272.87px;font-size:7.2px;color:#d8d8d8;">-50 °</div>
<div class="a" style="left:1087px;top:286.2px;width:143px;height:1px;background:#3a3a3a"></div>
<div class="a" style="left:1147.5px;top:283.2px;width:7px;height:7px;border-radius:50%;background:#8a8a8a"></div>
<div class="t" style="left:1087.2px;top:298.11px;font-size:7.3px;color:#dedede;">Inclination</div>
<div class="a" style="left:1207.5px;top:296.0px;width:53px;height:11px;background:#1c1c1c;border:1px solid #181818"></div>
<div class="t" style="left:1209.4px;top:297.97px;font-size:7.2px;color:#d8d8d8;">15 °</div>
<div class="a" style="left:1087px;top:311.2px;width:143px;height:1px;background:#3a3a3a"></div>
<div class="a" style="left:1183.7px;top:308.2px;width:7px;height:7px;border-radius:50%;background:#8a8a8a"></div>
<div class="t" style="left:1087.2px;top:325.31px;font-size:7.3px;color:#dedede;">Twist</div>
<div class="a" style="left:1207.5px;top:323.2px;width:53px;height:11px;background:#1c1c1c;border:1px solid #181818"></div>
<div class="t" style="left:1209.4px;top:325.17px;font-size:7.2px;color:#d8d8d8;">0 °</div>
<div class="a" style="left:1087px;top:338.1px;width:143px;height:1px;background:#3a3a3a"></div>
<div class="a" style="left:1170.1px;top:335.1px;width:7px;height:7px;border-radius:50%;background:#8a8a8a"></div>
<div class="a" style="left:1088px;top:348.3px;width:79.5px;height:14.5px;background:#4a4a4a;border:1px solid #1c1c1c;box-shadow:inset 0 1px 0 #5a5a5a"></div>
<svg class="a" style="left:1089.5px;top:350.55px" width="10" height="10"><circle cx="5" cy="5" r="4" fill="none" stroke="#7a7a7a" stroke-width=".8"/><circle cx="5" cy="5" r="2" fill="none" stroke="#6a6a6a" stroke-width=".8"/></svg>
<div class="t" style="left:1100.6px;top:351.96px;font-size:7.3px;color:#d8d8d8;">Set Camera Target</div>
<div class="t" style="left:1172.2px;top:351.84px;font-size:7.6px;color:#d0d0d0;">(0.00; 2.00; 0.00)</div>
<div class="a" style="left:1088px;top:368.3px;width:79.5px;height:15.599999999999966px;background:#4a4a4a;border:1px solid #1c1c1c;box-shadow:inset 0 1px 0 #5a5a5a"></div>
<svg class="a" style="left:1089.5px;top:371.1px" width="10" height="10"><circle cx="5" cy="5" r="4" fill="none" stroke="#7a7a7a" stroke-width=".8"/><circle cx="5" cy="5" r="2" fill="none" stroke="#6a6a6a" stroke-width=".8"/></svg>
<div class="t" style="left:1100.6px;top:372.51px;font-size:7.3px;color:#d8d8d8;">Walkthrough Mode</div>
<div class="t" style="left:1087.2px;top:391.41px;font-size:7.3px;color:#dedede;">Standard Views</div>
<div class="a" style="left:1200.5px;top:390px;width:60px;height:10.6px;background:linear-gradient(90deg,#3a3a3a,#444);border:1px solid #202020"></div>
<div class="t" style="left:1204px;top:391.41px;font-size:7.3px;color:#c0c0c0;">-</div>
<div class="t" style="left:1087.2px;top:407.41px;font-size:7.3px;color:#dedede;">Grid</div>
<div class="a" style="left:1200.5px;top:406px;width:60px;height:10.7px;background:linear-gradient(90deg,#3a3a3a,#444);border:1px solid #202020"></div>
<div class="t" style="left:1203.9px;top:407.41px;font-size:7.3px;color:#d0d0d0;">None</div>
<div class="a" style="left:1088px;top:422.1px;width:8.5px;height:8px;background:#f4f4f4"></div>
<div class="t" style="left:1100.6px;top:422.51px;font-size:7.3px;color:#dedede;">Stay Above Ground</div>
<div class="a" style="left:1080px;top:436.9px;width:186px;height:14px;background:#252525"></div>
<svg class="a" style="left:1083px;top:440.9px" width="7" height="6"><path d="M0.5 1h6L3.5 5Z" fill="#2f70d8"/></svg>
<div class="t" style="left:1092.2px;top:440.09px;font-size:7.7px;color:#ececec;font-weight:bold">Lens Settings</div>
<div class="a" style="left:1088.1000000000001px;top:457.0px;width:7.2px;height:7.2px;border-radius:50%;background:#2f80f0;box-shadow:0 0 1.5px #2f80f0"></div>
<div class="t" style="left:1099.7px;top:457.01px;font-size:7.3px;color:#dedede;">Perspective</div>
<div class="a" style="left:1088.1000000000001px;top:473.09999999999997px;width:7.2px;height:7.2px;border-radius:50%;background:#262626;border:1px solid #3a3a3a"></div>
<div class="t" style="left:1099.7px;top:473.11px;font-size:7.3px;color:#dedede;">Orthographic</div>
<div class="a" style="left:1088.1000000000001px;top:488.9px;width:7.2px;height:7.2px;border-radius:50%;background:#262626;border:1px solid #3a3a3a"></div>
<div class="t" style="left:1099.7px;top:488.91px;font-size:7.3px;color:#dedede;">Shift</div>
<div class="a" style="left:1088.1000000000001px;top:505.0px;width:7.2px;height:7.2px;border-radius:50%;background:#262626;border:1px solid #3a3a3a"></div>
<div class="t" style="left:1099.7px;top:505.01px;font-size:7.3px;color:#dedede;">Panoramic</div>
<div class="a" style="left:1088px;top:518.9px;width:78.70000000000005px;height:15.300000000000068px;background:#4a4a4a;border:1px solid #1c1c1c;box-shadow:inset 0 1px 0 #5a5a5a"></div>
<svg class="a" style="left:1089.5px;top:521.55px" width="10" height="10"><circle cx="5" cy="5" r="4" fill="none" stroke="#7a7a7a" stroke-width=".8"/><circle cx="5" cy="5" r="2" fill="none" stroke="#6a6a6a" stroke-width=".8"/></svg>
<div class="t" style="left:1100.6px;top:522.96px;font-size:7.3px;color:#d8d8d8;">Match Perspective</div>
<div class="t" style="left:1087.2px;top:541.82px;font-size:7.1px;color:#dedede;">Perspective / Focal Length</div>
<div class="a" style="left:1207.5px;top:539.3px;width:53px;height:11px;background:#1c1c1c;border:1px solid #181818"></div>
<div class="t" style="left:1209.4px;top:541.27px;font-size:7.2px;color:#d8d8d8;">50 mm</div>
<div class="a" style="left:1087px;top:555.1px;width:143px;height:1px;background:#3a3a3a"></div>
<div class="a" style="left:1126.2px;top:552.1px;width:7px;height:7px;border-radius:50%;background:#8a8a8a"></div>
<div class="t" style="left:1087.2px;top:567.01px;font-size:7.3px;color:#dedede;">Field of View</div>
<div class="a" style="left:1207.5px;top:564.7px;width:53px;height:11px;background:#1c1c1c;border:1px solid #181818"></div>
<div class="t" style="left:1209.4px;top:566.67px;font-size:7.2px;color:#d8d8d8;">39.598 °</div>
<div class="a" style="left:1087px;top:580.3px;width:143px;height:1px;background:#3a3a3a"></div>
<div class="a" style="left:1124.0px;top:577.3px;width:7px;height:7px;border-radius:50%;background:#8a8a8a"></div>
<div class="a" style="left:1088px;top:590.9px;width:8.5px;height:8px;background:#f4f4f4"></div>
<div class="t" style="left:1100.6px;top:591.31px;font-size:7.3px;color:#dedede;">Ground Grid</div>
<div class="a" style="left:1080px;top:605px;width:186px;height:27px;background:#262626"></div>
<svg class="a" style="left:1083.5px;top:609px" width="6" height="7"><path d="M1 1l3 2.5L1 6" fill="none" stroke="#c8c8c8" stroke-width="1.2"/></svg>
<div class="a" style="left:1095.5px;top:608.5px;width:8.5px;height:8px;background:#f4f4f4"></div>
<div class="t" style="left:1108.9px;top:608.69px;font-size:7.7px;color:#ececec;font-weight:bold">Stereo</div>
<svg class="a" style="left:1083px;top:622px" width="7" height="6"><path d="M0.5 1h6L3.5 5Z" fill="#2f70d8"/></svg>
<div class="a" style="left:1095.5px;top:621px;width:8.5px;height:8px;background:#f4f4f4"></div>
<div class="t" style="left:1108.9px;top:621.19px;font-size:7.7px;color:#ececec;font-weight:bold">Depth of Field</div>
<div class="t" style="left:1086.7px;top:640.11px;font-size:7.3px;color:#5a5a5a;">Focus Distance</div>
<svg class="a" style="left:1193px;top:639px" width="9" height="9"><circle cx="4.5" cy="4.5" r="3.5" fill="none" stroke="#444" stroke-width="1"/></svg>
<div class="t" style="left:1208.5px;top:640.11px;font-size:7.3px;color:#5a5a5a;">5</div>
<div class="a" style="left:1087px;top:654px;width:143px;height:1px;background:#303030"></div>
<div class="t" style="left:1086.7px;top:665.61px;font-size:7.3px;color:#4a4a4a;">F-stop</div>
<div class="t" style="left:1209px;top:665.61px;font-size:7.3px;color:#4a4a4a;">1</div><div class="a" style="left:3px;top:680px;width:1px;height:40px;border-left:1px dotted #a0a0a0"></div>
<svg class="a" style="left:20px;top:683px" width="22" height="20"><path d="M5 15a4 4 0 0 1-1-7.8a5 5 0 0 1 6-4.5a5 5 0 0 1 8 3a4 4 0 0 1-1 9.3Z" fill="none" stroke="#8a8a8a" stroke-width="1.6"/><circle cx="11" cy="10.5" r="3" fill="none" stroke="#8a8a8a" stroke-width="1.3"/><path d="M8 5.5q3 2 6 0M7 13q4 3 8 0" fill="none" stroke="#7a7a7a" stroke-width="1"/></svg>
<div class="c" style="left:30.5px;top:708px;font-size:7.1px;color:#d0d0d0">Cloud Library</div>
<svg class="a" style="left:1241px;top:682px" width="24" height="22"><path d="M2 5V1.5h4M9 1.5h4M16.5 1.5V5M2 8v4M2 15v3.5h4" fill="none" stroke="#9a9a9a" stroke-width="1.3"/><circle cx="17" cy="16" r="4" fill="none" stroke="#9a9a9a" stroke-width="1.2"/><path d="M17 10.5v11M11.5 16h11" stroke="#9a9a9a" stroke-width="1"/></svg>
<div class="c" style="left:1253.7px;top:708.5px;font-size:7.1px;color:#d0d0d0">Screenshot</div>
<div class="a" style="left:279px;top:67px;width:577px;height:653px;background:#fff;border-left:1px solid #9a9a9a;border-top:1px solid #b0b0b0;border-right:1px solid #c0c0c0;box-shadow:2px 0 8px rgba(0,0,0,.22)"></div>
<svg class="a" style="left:285px;top:71px" width="64" height="13"><rect x="1" y="1" width="8" height="11" fill="#f2d36f"/><rect x="1" y="1" width="3" height="11" fill="#e8c350"/><path d="M15.5 2v9" stroke="#c8c8c8" stroke-width="1"/><rect x="23.5" y="1.5" width="7" height="10" fill="#fff" stroke="#7a7a7a" stroke-width="1"/><path d="M25 6l1.5 2 3-4" fill="none" stroke="#d04a2a" stroke-width="1"/><rect x="37" y="1" width="8" height="11" fill="#f2d36f"/><rect x="37" y="1" width="3" height="11" fill="#e8c350"/><path d="M51 6h5l-2.5 3z" fill="#333"/><path d="M51 4.5h5" stroke="#333" stroke-width=".8"/><path d="M61.5 2v9" stroke="#c8c8c8"/></svg>
<div class="t ex" style="left:352px;top:74.39px;font-size:7.7px;color:#ababab;">Inception</div>
<div class="a" style="left:775px;top:77.5px;width:10px;height:1px;background:#a8a8a8"></div>
<div class="a" style="left:805.5px;top:73px;width:9px;height:9px;border:1px solid #a0a0a0"></div>
<svg class="a" style="left:835px;top:72.5px" width="11" height="11"><path d="M1 1L10 10M10 1L1 10" stroke="#909090" stroke-width=".9"/></svg>
<div class="a" style="left:280px;top:88px;width:37px;height:15px;background:#1c5fb8"></div>
<div class="c ex" style="left:297px;top:92.69px;font-size:7.7px;color:#fff;">File</div>
<div class="a" style="left:317px;top:88px;width:37px;height:16px;background:#f5f6f7;border:1px solid #e6e7e8;border-bottom:none"></div>
<div class="c ex" style="left:336px;top:92.69px;font-size:7.7px;color:#222;">Home</div>
<div class="c ex" style="left:374.7px;top:92.69px;font-size:7.7px;color:#222;">Share</div>
<div class="c ex" style="left:412.5px;top:92.69px;font-size:7.7px;color:#222;">View</div>
<svg class="a" style="left:829px;top:92px" width="9" height="6"><path d="M1 5L4.5 1.5L8 5" fill="none" stroke="#7aa0d0" stroke-width="1"/></svg>
<div class="a" style="left:842.5px;top:89.5px;width:11px;height:11px;border-radius:50%;background:#1a5fb4"></div>
<div class="c" style="left:848px;top:91px;font-size:8.5px;color:#fff;font-weight:bold">?</div>
<div class="a" style="left:280px;top:103px;width:575px;height:62px;background:#f5f6f7;border-top:1px solid #dadbdc;border-bottom:1px solid #dadbdc"></div>
<div class="a" style="left:453.5px;top:108px;width:1px;height:53px;background:#e2e3e4"></div>
<div class="a" style="left:581px;top:108px;width:1px;height:53px;background:#e2e3e4"></div>
<div class="a" style="left:679.5px;top:108px;width:1px;height:53px;background:#e2e3e4"></div>
<div class="a" style="left:766px;top:108px;width:1px;height:53px;background:#e2e3e4"></div>
<div class="c ex" style="left:366px;top:154.89px;font-size:7.7px;color:#5a5a5a;">Clipboard</div>
<div class="c ex" style="left:517px;top:154.89px;font-size:7.7px;color:#5a5a5a;">Organize</div>
<div class="c ex" style="left:629px;top:154.89px;font-size:7.7px;color:#5a5a5a;">New</div>
<div class="c ex" style="left:721.7px;top:154.89px;font-size:7.7px;color:#5a5a5a;">Open</div>
<div class="c ex" style="left:804.4px;top:154.89px;font-size:7.7px;color:#5a5a5a;">Select</div>
<svg class="a" style="left:297px;top:111px" width="16" height="17"><path d="M9 2l5 5-2 1-3 3 0 2-2 0-4-4 0-2 2 0 3-3Z" fill="#7a7a7a"/><path d="M5 10L1 15" stroke="#7a7a7a" stroke-width="1.6"/></svg>
<div class="c ex" style="left:305px;top:133.29px;font-size:7.7px;color:#222;">Pin to Quick</div>
<div class="c ex" style="left:305px;top:141.89px;font-size:7.7px;color:#222;">access</div>
<svg class="a" style="left:332px;top:110px" width="18" height="19"><rect x="1.5" y="1.5" width="10" height="12" fill="#e8eaf2" stroke="#b8bcd0"/><rect x="6.5" y="5.5" width="10" height="12" fill="#dfe2ee" stroke="#b0b4c8"/></svg>
<div class="c ex" style="left:341.5px;top:133.29px;font-size:7.7px;color:#9a9a9a;">Copy</div>
<svg class="a" style="left:362px;top:109px" width="16" height="20"><rect x="1.5" y="3.5" width="13" height="15" fill="#e6eaf8" stroke="#8088b0"/><rect x="5" y="1.5" width="6" height="3" fill="#fff" stroke="#8088b0"/><path d="M4 8h8M4 11h8M4 14h8" stroke="#c8ccdc" stroke-width=".8"/></svg>
<div class="c ex" style="left:369.6px;top:133.29px;font-size:7.7px;color:#8a8a8a;">Paste</div>
<svg class="a" style="left:386px;top:109px" width="11" height="11"><circle cx="3" cy="8.5" r="2" fill="none" stroke="#8a8a8a"/><circle cx="8" cy="8.5" r="2" fill="none" stroke="#8a8a8a"/><path d="M3.5 6.5L7 1M7.5 6.5L4 1" stroke="#8a8a8a" stroke-width=".8"/></svg>
<div class="t ex" style="left:399px;top:110.39px;font-size:7.7px;color:#9a9a9a;">Cut</div>
<svg class="a" style="left:385px;top:124px" width="12" height="9"><rect x="1" y="2" width="10" height="5" fill="#e3e5ef" stroke="#c0c4d8" stroke-width=".8"/><path d="M3 4.5h6" stroke="#a0a4b8"/></svg>
<div class="t ex" style="left:399px;top:125.09px;font-size:7.7px;color:#9a9a9a;">Copy path</div>
<svg class="a" style="left:386px;top:137px" width="11" height="12"><rect x="1.5" y="1.5" width="8" height="10" fill="#eef0f8" stroke="#9098b8"/><path d="M4 4h3v3" fill="none" stroke="#8088b0" stroke-width=".8"/></svg>
<div class="t ex" style="left:399px;top:139.59px;font-size:7.7px;color:#9a9a9a;">Paste shortcut</div>
<svg class="a" style="left:463px;top:110px" width="18" height="19"><rect x="1" y="1" width="13" height="17" fill="#dde3f2"/><path d="M17 12H9M12 9l-3 3 3 3" fill="none" stroke="#a8acc0" stroke-width="2"/></svg>
<div class="c ex" style="left:470.5px;top:133.29px;font-size:7.7px;color:#9a9a9a;">Move</div>
<div class="c ex" style="left:470.5px;top:142.28px;font-size:7px;color:#9a9a9a;">to ▾</div>
<svg class="a" style="left:492px;top:109px" width="16" height="20"><rect x="1" y="4" width="14" height="15" fill="#dde2f0"/><path d="M4 2v10M8 2v10M12 2v10" stroke="#c4c8d8" stroke-width="1.5"/></svg>
<div class="c ex" style="left:499px;top:133.29px;font-size:7.7px;color:#9a9a9a;">Copy</div>
<div class="c ex" style="left:499px;top:142.28px;font-size:7px;color:#9a9a9a;">to ▾</div>
<svg class="a" style="left:524px;top:110px" width="17" height="17"><path d="M1.5 1.5L15.5 15.5M15.5 1.5L1.5 15.5" stroke="#6870a0" stroke-width="2.2"/></svg>
<div class="c ex" style="left:532px;top:133.29px;font-size:7.7px;color:#2a2a2a;">Delete</div>
<svg class="a" style="left:530px;top:143px" width="5" height="3"><path d="M0 0h5L2.5 3z" fill="#222"/></svg>
<svg class="a" style="left:551px;top:110px" width="22" height="18"><rect x="1" y="6" width="18" height="6" fill="#e4e6ee" stroke="#c8cad8" stroke-width=".8"/><path d="M4 9h8" stroke="#b0b4c4" stroke-width="2"/><path d="M15 1h4M17 1v16M15 17h4" stroke="#8a8a9a" stroke-width="1"/></svg>
<div class="c ex" style="left:562px;top:133.29px;font-size:7.7px;color:#9a9a9a;">Rename</div>
<svg class="a" style="left:590px;top:109px" width="15" height="19"><rect x="1" y="3" width="13" height="15" fill="#f1cf6a"/><rect x="1" y="3" width="5" height="15" fill="#f7e09a"/></svg>
<div class="c ex" style="left:597.5px;top:133.29px;font-size:7.7px;color:#222;">New</div>
<div class="c ex" style="left:597.5px;top:141.89px;font-size:7.7px;color:#222;">folder</div>
<svg class="a" style="left:614px;top:108px" width="12" height="12"><rect x="1.5" y="1.5" width="5" height="5" fill="#f8f8f8" stroke="#7a7a7a" stroke-width=".8"/><rect x="4.5" y="4.5" width="6" height="6.5" fill="#fff" stroke="#7a7a7a" stroke-width=".8"/></svg>
<div class="t ex" style="left:627.5px;top:110.39px;font-size:7.7px;color:#2a2a2a;">New item ▾</div>
<svg class="a" style="left:614px;top:123px" width="12" height="12"><rect x="3.5" y="1.5" width="7" height="9.5" fill="#fff" stroke="#6a6a6a" stroke-width=".8"/><path d="M1 6h3" stroke="#6a6a6a"/></svg>
<div class="t ex" style="left:627.5px;top:125.09px;font-size:7.7px;color:#2a2a2a;">Easy access ▾</div>
<svg class="a" style="left:691px;top:108px" width="17" height="21"><rect x="1.5" y="1.5" width="14" height="18" fill="#fff" stroke="#7a7a7a" stroke-width=".9"/><path d="M4 10l3 3 6-7" fill="none" stroke="#e06a2a" stroke-width="1.6"/></svg>
<div class="c ex" style="left:699.4px;top:133.29px;font-size:7.7px;color:#2a2a2a;">Properties</div>
<svg class="a" style="left:697px;top:143px" width="5" height="3"><path d="M0 0h5L2.5 3z" fill="#222"/></svg>
<svg class="a" style="left:721px;top:108px" width="11" height="12"><rect x="1.5" y="1.5" width="7" height="9" fill="#eef0f8" stroke="#a8b0d0" stroke-width=".8"/><path d="M3 8l4-4" stroke="#a0a8c8"/></svg>
<div class="t ex" style="left:734px;top:110.39px;font-size:7.7px;color:#a0a0a0;">Open ▾</div>
<svg class="a" style="left:721px;top:123px" width="11" height="12"><rect x="1.5" y="1.5" width="7" height="9" fill="#f2f4fa" stroke="#b0b8d8" stroke-width=".8"/></svg>
<div class="t ex" style="left:734px;top:125.09px;font-size:7.7px;color:#a0a0a0;">Edit</div>
<svg class="a" style="left:720px;top:137px" width="12" height="12"><path d="M1 2h6v8H1z" fill="#e8d890"/><circle cx="7" cy="7.5" r="3.5" fill="#4aaa4a" stroke="#fff" stroke-width=".8"/></svg>
<div class="t ex" style="left:734px;top:139.59px;font-size:7.7px;color:#2a2a2a;">History</div>
<svg class="a" style="left:771px;top:108px" width="12" height="12"><rect x="1" y="1" width="10" height="10" fill="#4a90e0"/><path d="M6 1v10M1 6h10" stroke="#fff" stroke-width="1"/></svg>
<div class="t ex" style="left:784.5px;top:110.39px;font-size:7.7px;color:#2a2a2a;">Select all</div>
<svg class="a" style="left:771px;top:123px" width="12" height="12"><path d="M1.5 1.5h3.5v3.5H1.5zM7 1.5h3.5v3.5H7zM1.5 7h3.5v3.5H1.5zM7 7h3.5v3.5H7z" fill="none" stroke="#9ab0c8" stroke-width=".8"/></svg>
<div class="t ex" style="left:784.5px;top:125.09px;font-size:7.7px;color:#2a2a2a;">Select none</div>
<svg class="a" style="left:771px;top:137px" width="12" height="12"><rect x="1.5" y="5.5" width="5" height="5" fill="#fff" stroke="#4a90e0" stroke-width=".8"/><rect x="5" y="1" width="6" height="6" fill="#4a90e0"/></svg>
<div class="t ex" style="left:784.5px;top:139.59px;font-size:7.7px;color:#2a2a2a;">Invert selection</div>
<svg class="a" style="left:286px;top:173px" width="62" height="11"><path d="M2 5.5h8M2 5.5l3.5-3.5M2 5.5l3.5 3.5" fill="none" stroke="#6a6a6a" stroke-width="1"/><path d="M29.5 5.5h-8M29.5 5.5l-3.5-3.5M29.5 5.5l-3.5 3.5" fill="none" stroke="#6a6a6a" stroke-width="1"/><path d="M39 4.5l2 2 2-2" fill="none" stroke="#a0a0a0" stroke-width=".8"/><path d="M55 1.5v9M55 1.5l-3.5 3.5M55 1.5l3.5 3.5" fill="none" stroke="#6a6a6a" stroke-width="1"/></svg>
<div class="a" style="left:350.5px;top:168px;width:241px;height:20.5px;border:1px solid #e3e3e3"></div>
<div class="a" style="left:591px;top:168px;width:20px;height:20.5px;border:1px solid #e3e3e3;border-left:none"></div>
<svg class="a" style="left:352px;top:172px" width="10" height="13"><rect x="1" y="1" width="8" height="11" fill="#f2d36f"/><rect x="1" y="1" width="3" height="11" fill="#e8c350"/></svg>
<div class="t ex" style="left:365.5px;top:173.66px;font-size:9px;color:#3a3a3a;">«</div>
<div class="t ex" style="left:377px;top:174.89px;font-size:7.7px;color:#222;">Avenger (D:)</div>
<div class="t ex" style="left:425.5px;top:174.72px;font-size:8px;color:#7a7a7a;">›</div>
<div class="t ex" style="left:436px;top:174.89px;font-size:7.7px;color:#222;">Projects</div>
<div class="t ex" style="left:469.5px;top:174.72px;font-size:8px;color:#7a7a7a;">›</div>
<div class="t ex" style="left:479.3px;top:174.89px;font-size:7.7px;color:#222;">R21</div>
<div class="t ex" style="left:497.5px;top:174.72px;font-size:8px;color:#7a7a7a;">›</div>
<div class="t ex" style="left:507.4px;top:174.89px;font-size:7.7px;color:#222;">Inception</div>
<svg class="a" style="left:577px;top:175.5px" width="9" height="6"><path d="M1 1l3.5 3.5L8 1" fill="none" stroke="#3a3a3a" stroke-width="1"/></svg>
<svg class="a" style="left:596px;top:173px" width="11" height="11"><path d="M8.5 3A3.8 3.8 0 1 0 9 6.5" fill="none" stroke="#4a4a4a" stroke-width="1"/><path d="M6.5 1.5h3v3" fill="none" stroke="#4a4a4a" stroke-width="1"/></svg>
<div class="a" style="left:621px;top:168px;width:227px;height:20.5px;border:1px solid #e3e3e3"></div>
<svg class="a" style="left:629px;top:172.5px" width="11" height="11"><circle cx="6.5" cy="4.5" r="3.2" fill="none" stroke="#9a9a9a" stroke-width=".9"/><path d="M4.2 6.8L1 10" stroke="#9a9a9a" stroke-width="1"/></svg>
<div class="t ex" style="left:648px;top:174.89px;font-size:7.7px;color:#6a6a6a;">Search Inception</div>
<div class="a" style="left:280px;top:369px;width:147.5px;height:16px;background:#d9d9d9"></div>
<svg class="a" style="left:295.7px;top:206.75px" width="10" height="10"><path d="M5 0.5L6.3 3.7 9.7 3.9 7.1 6.1 7.9 9.5 5 7.6 2.1 9.5 2.9 6.1 0.3 3.9 3.7 3.7Z" fill="#3a86d8"/></svg>
<div class="t ex" style="left:309.4px;top:207.97px;font-size:8px;color:#222;">Quick access</div>
<svg class="a" style="left:295px;top:228px" width="10" height="10"><rect x="0" y="1" width="10" height="7" fill="#3a8ee0"/><rect x="1" y="2" width="8" height="5" fill="#8ac4f0"/><rect x="3" y="8.5" width="4" height="1" fill="#6a6a6a"/></svg>
<div class="t ex" style="left:309.4px;top:229.22px;font-size:8px;color:#222;">This PC</div>
<svg class="a" style="left:300.6px;top:244.2px" width="10" height="10"><path d="M5 0.5L9.5 2.5V7.5L5 9.5 0.5 7.5V2.5Z" fill="#36b0e8"/><path d="M0.5 2.5L5 4.5 9.5 2.5M5 4.5V9.5" stroke="#1a7ab8" stroke-width=".7" fill="none"/></svg>
<div class="t ex" style="left:314.6px;top:245.42px;font-size:8px;color:#222;">3D Objects</div>
<svg class="a" style="left:300.6px;top:260px" width="10" height="10"><rect x="0" y="1.5" width="10" height="7" fill="#2a7ed8"/><rect x="0" y="7.5" width="10" height="1" fill="#1a5a9a"/></svg>
<div class="t ex" style="left:314.6px;top:261.22px;font-size:8px;color:#222;">Desktop</div>
<svg class="a" style="left:300.6px;top:276.1px" width="10" height="10"><rect x="1.5" y="0.5" width="7" height="9" fill="#f4f6fa" stroke="#8a9ab0" stroke-width=".8"/><path d="M3 3h4M3 5h4M3 7h4" stroke="#9aaac0" stroke-width=".6"/></svg>
<div class="t ex" style="left:314.6px;top:277.32px;font-size:8px;color:#222;">Documents</div>
<svg class="a" style="left:300.6px;top:292px" width="10" height="10"><path d="M3.5 0.5h3v4.5h2.5L5 9.5 1 5h2.5Z" fill="#2a7ed8"/></svg>
<div class="t ex" style="left:314.6px;top:293.22px;font-size:8px;color:#222;">Downloads</div>
<svg class="a" style="left:300.6px;top:308px" width="10" height="10"><path d="M4 1v6.5" stroke="#2a8ad8" stroke-width="1.2"/><ellipse cx="2.8" cy="7.8" rx="2" ry="1.6" fill="#2a8ad8"/><path d="M4 1q3 1 4 3" fill="none" stroke="#2a8ad8" stroke-width="1.2"/></svg>
<div class="t ex" style="left:314.6px;top:309.22px;font-size:8px;color:#222;">Music</div>
<svg class="a" style="left:300.6px;top:324px" width="10" height="10"><rect x="0.5" y="1.5" width="9" height="7" fill="#e8eef4" stroke="#8a9aaa" stroke-width=".7"/><path d="M1 8l3-3 2 2 1-1 2 2Z" fill="#4a8ac8"/></svg>
<div class="t ex" style="left:314.6px;top:325.22px;font-size:8px;color:#222;">Pictures</div>
<svg class="a" style="left:300.6px;top:340px" width="10" height="10"><rect x="1" y="0.5" width="8" height="9" fill="#5a6a7a"/><rect x="2.5" y="2" width="5" height="6" fill="#a0b0c0"/></svg>
<div class="t ex" style="left:314.6px;top:341.22px;font-size:8px;color:#222;">Videos</div>
<svg class="a" style="left:300.6px;top:356px" width="10" height="10"><rect x="0" y="6" width="10" height="3" fill="#7a8a9a"/><path d="M1 1h3v4H1z" fill="#3a8ad8"/></svg>
<div class="t ex" style="left:314.6px;top:357.22px;font-size:8px;color:#222;">Avenger (C:)</div>
<svg class="a" style="left:300.6px;top:372px" width="10" height="10"><rect x="0" y="5.5" width="10" height="3" fill="#5a6270"/><rect x="0" y="5.5" width="10" height="1" fill="#9aa2b0"/></svg>
<div class="t ex" style="left:314.6px;top:373.22px;font-size:8px;color:#222;">Avenger (D:)</div>
<svg class="a" style="left:300.6px;top:388px" width="10" height="10"><rect x="0" y="5.5" width="10" height="3" fill="#5a6270"/><rect x="0" y="5.5" width="10" height="1" fill="#9aa2b0"/></svg>
<div class="t ex" style="left:314.6px;top:389.22px;font-size:8px;color:#222;">Avenger (E:)</div>
<svg class="a" style="left:300.6px;top:404px" width="10" height="10"><rect x="0" y="5.5" width="10" height="3" fill="#5a6270"/><rect x="0" y="5.5" width="10" height="1" fill="#9aa2b0"/></svg>
<div class="t ex" style="left:314.6px;top:405.22px;font-size:8px;color:#222;">Avenger (F:)</div>
<svg class="a" style="left:295px;top:425.3px" width="10" height="10"><rect x="0" y="2" width="10" height="6" rx="1" fill="#3a8ee0"/><rect x="1.5" y="3" width="7" height="3.5" fill="#9ad0f8"/></svg>
<div class="t ex" style="left:309.4px;top:426.52px;font-size:8px;color:#222;">Network</div>
<svg class="a" style="left:453.9px;top:205px" width="40" height="58"><path d="M0 1h12l2 1h19v51H0Z" fill="#f6dc8e"/><path d="M20 6 L35 9 L35 48 L20 46Z" fill="#1a1080"/><path d="M28 20q3 0 3 4" stroke="#fff" stroke-width="1.5" fill="none"/><path d="M11 3 L28 7 L29 56 L11 52Z" fill="#3a3232"/><path d="M13 30 Q19 26 24 33 Q18 36 13 34Z" fill="#c8b8b0"/><path d="M18 34v14" stroke="#2a2020" stroke-width="2"/><path d="M0 1h11v52H0Z" fill="#f3d57c"/><path d="M11 1v52" stroke="#e6c25a" stroke-width=".6"/></svg>
<svg class="a" style="left:537.0px;top:205px" width="40" height="58"><path d="M0 1h12l2 1h19v51H0Z" fill="#f6dc8e"/><path d="M20 6 L33 8 L36 12 L36 50 L20 48Z" fill="#fafafa" stroke="#9a9a9a" stroke-width=".8"/><path d="M11 3 L23 6 L28 11 L28 56 L11 52Z" fill="#fcfcfc" stroke="#7a7a7a" stroke-width=".9"/><path d="M15 26 L20 23 L24 26 L24 34 L19 38 L14 35 L15 31 L19 29 L20 33" fill="none" stroke="#111" stroke-width="1.8"/><path d="M0 1h11v52H0Z" fill="#f3d57c"/><path d="M11 1v52" stroke="#e6c25a" stroke-width=".6"/></svg>
<svg class="a" style="left:620.5px;top:205px" width="40" height="58"><path d="M0 1h12l2 1h19v51H0Z" fill="#f6dc8e"/><path d="M14 5 L36 9 L36 49 L14 46Z" fill="#161616"/><path d="M25 15 q6 6 2 18" fill="none" stroke="#e8e8e8" stroke-width="1.2"/><path d="M26 30h3v4h-3z" fill="#ddd"/><path d="M11 3 L26 7 L27 56 L11 52Z" fill="#b4aa9c"/><path d="M19 30 L20 47 L18 47Z" fill="#111"/><path d="M14 43h10" stroke="#111" stroke-width="1"/><path d="M0 1h11v52H0Z" fill="#f3d57c"/><path d="M11 1v52" stroke="#e6c25a" stroke-width=".6"/></svg>
<svg class="a" style="left:703.5px;top:205px" width="40" height="58"><path d="M0 1h12l2 1h19v51H0Z" fill="#f6dc8e"/><path d="M11 3 L36 8 L36 52 L11 50Z" fill="#363232"/><path d="M17 22 Q23 19 28 27 Q22 33 17 28Z" fill="#d2c2b0"/><path d="M27 24 L32 17" stroke="#c8b8a8" stroke-width="1"/><path d="M0 1h11v52H0Z" fill="#f3d57c"/><path d="M11 1v52" stroke="#e6c25a" stroke-width=".6"/></svg>
<svg class="a" style="left:787.0px;top:205px" width="40" height="58"><path d="M0 1h12l2 1h19v51H0Z" fill="#f6dc8e"/><path d="M14 5 L37 8 L37 50 L14 48Z" fill="#2a9ae0"/><circle cx="33" cy="34" r="1" fill="#1a2a60"/><path d="M11 3 L25 6 L26 56 L11 52Z" fill="#b89888"/><path d="M11 3 L25 6 L25 25 Q18 22 13 28 L11 30Z" fill="#2a2020"/><path d="M12 42 L25 44 L26 56 L11 52Z" fill="#9ab0c8"/><path d="M0 1h11v52H0Z" fill="#f3d57c"/><path d="M11 1v52" stroke="#e6c25a" stroke-width=".6"/></svg>
<div class="c ex" style="left:474.4px;top:264.22px;font-size:8px;color:#222;">Animation</div>
<div class="c ex" style="left:557.5px;top:264.22px;font-size:8px;color:#222;">Models</div>
<div class="c ex" style="left:641px;top:264.22px;font-size:8px;color:#222;">reference</div>
<div class="c ex" style="left:724px;top:264.22px;font-size:8px;color:#222;">Renderings</div>
<div class="c ex" style="left:807.5px;top:264.22px;font-size:8px;color:#222;">Textures</div>
<div class="a" style="left:443.2px;top:304.6px;width:61.5px;height:34.2px;background:#000"></div>
<svg class="a" style="left:443.2px;top:304.6px" width="62" height="35"><path d="M30 6 L31.5 6 L32 16 Q38 17 39.5 20 Q37 22 33 23 L31 24.5 L29 23 Q24 22 21.5 20 Q23 17 29.5 16Z" fill="#fff"/></svg>
<svg class="a" style="left:442.7px;top:324.8px" width="15" height="15"><circle cx="7.5" cy="7.5" r="7" fill="#3a8ee8"/><circle cx="7.5" cy="7.5" r="5.3" fill="#e8f2fc"/><path d="M7.5 2.5 A5 5 0 0 1 12.5 7.5 L9.5 7.5Z M12.5 7.5 A5 5 0 0 1 7.5 12.5 L7.5 9.5Z M7.5 12.5 A5 5 0 0 1 2.5 7.5 L5.5 7.5Z M2.5 7.5 A5 5 0 0 1 7.5 2.5 L7.5 5.5Z" fill="#2a70d0"/><circle cx="7.5" cy="7.5" r="2.4" fill="#2e2e36"/></svg>
<div class="a" style="left:526.5px;top:304.6px;width:61.5px;height:34.2px;background:linear-gradient(90deg,#4a4444,#3a3434 40%,#403a3a 70%,#4a4444)"></div>
<svg class="a" style="left:526.5px;top:304.6px" width="62" height="35"><path d="M31 5v12" stroke="#8a7a78" stroke-width="2" opacity=".6"/><path d="M22 20 Q31 15 40 20 Q31 24 22 20Z" fill="#d8d0cc"/><path d="M29 22 L31 27 L33 22Z" fill="#6a5a58"/><path d="M26 26 Q31 32 36 26" stroke="#2a2020" stroke-width="3" fill="none" opacity=".5"/></svg>
<svg class="a" style="left:526.0px;top:324.8px" width="15" height="15"><circle cx="7.5" cy="7.5" r="7" fill="#3a8ee8"/><circle cx="7.5" cy="7.5" r="5.3" fill="#e8f2fc"/><path d="M7.5 2.5 A5 5 0 0 1 12.5 7.5 L9.5 7.5Z M12.5 7.5 A5 5 0 0 1 7.5 12.5 L7.5 9.5Z M7.5 12.5 A5 5 0 0 1 2.5 7.5 L5.5 7.5Z M2.5 7.5 A5 5 0 0 1 7.5 2.5 L7.5 5.5Z" fill="#2a70d0"/><circle cx="7.5" cy="7.5" r="2.4" fill="#2e2e36"/></svg>
<div class="a" style="left:609.9px;top:304.6px;width:61.5px;height:34.2px;background:#000"></div>
<svg class="a" style="left:609.9px;top:304.6px" width="62" height="35"><path d="M30 6 L31.5 6 L32 16 Q38 17 39.5 20 Q37 22 33 23 L31 24.5 L29 23 Q24 22 21.5 20 Q23 17 29.5 16Z" fill="#fff"/></svg>
<svg class="a" style="left:609.4px;top:324.8px" width="15" height="15"><circle cx="7.5" cy="7.5" r="7" fill="#3a8ee8"/><circle cx="7.5" cy="7.5" r="5.3" fill="#e8f2fc"/><path d="M7.5 2.5 A5 5 0 0 1 12.5 7.5 L9.5 7.5Z M12.5 7.5 A5 5 0 0 1 7.5 12.5 L7.5 9.5Z M7.5 12.5 A5 5 0 0 1 2.5 7.5 L5.5 7.5Z M2.5 7.5 A5 5 0 0 1 7.5 2.5 L7.5 5.5Z" fill="#2a70d0"/><circle cx="7.5" cy="7.5" r="2.4" fill="#2e2e36"/></svg>
<div class="a" style="left:693px;top:304.6px;width:61.5px;height:34.2px;background:linear-gradient(90deg,#4a4444,#3a3434 40%,#403a3a 70%,#4a4444)"></div>
<svg class="a" style="left:693px;top:304.6px" width="62" height="35"><path d="M31 5v12" stroke="#8a7a78" stroke-width="2" opacity=".6"/><path d="M22 20 Q31 15 40 20 Q31 24 22 20Z" fill="#d8d0cc"/><path d="M29 22 L31 27 L33 22Z" fill="#6a5a58"/><path d="M26 26 Q31 32 36 26" stroke="#2a2020" stroke-width="3" fill="none" opacity=".5"/></svg>
<svg class="a" style="left:692.5px;top:324.8px" width="15" height="15"><circle cx="7.5" cy="7.5" r="7" fill="#3a8ee8"/><circle cx="7.5" cy="7.5" r="5.3" fill="#e8f2fc"/><path d="M7.5 2.5 A5 5 0 0 1 12.5 7.5 L9.5 7.5Z M12.5 7.5 A5 5 0 0 1 7.5 12.5 L7.5 9.5Z M7.5 12.5 A5 5 0 0 1 2.5 7.5 L5.5 7.5Z M2.5 7.5 A5 5 0 0 1 7.5 2.5 L7.5 5.5Z" fill="#2a70d0"/><circle cx="7.5" cy="7.5" r="2.4" fill="#2e2e36"/></svg>
<div class="a" style="left:776.4px;top:304.6px;width:61.5px;height:34.2px;background:linear-gradient(90deg,#4a4444,#3a3434 40%,#403a3a 70%,#4a4444)"></div>
<svg class="a" style="left:776.4px;top:304.6px" width="62" height="35"><path d="M31 5v12" stroke="#8a7a78" stroke-width="2" opacity=".6"/><path d="M22 20 Q31 15 40 20 Q31 24 22 20Z" fill="#d8d0cc"/><path d="M29 22 L31 27 L33 22Z" fill="#6a5a58"/><path d="M26 26 Q31 32 36 26" stroke="#2a2020" stroke-width="3" fill="none" opacity=".5"/></svg>
<svg class="a" style="left:775.9px;top:324.8px" width="15" height="15"><circle cx="7.5" cy="7.5" r="7" fill="#3a8ee8"/><circle cx="7.5" cy="7.5" r="5.3" fill="#e8f2fc"/><path d="M7.5 2.5 A5 5 0 0 1 12.5 7.5 L9.5 7.5Z M12.5 7.5 A5 5 0 0 1 7.5 12.5 L7.5 9.5Z M7.5 12.5 A5 5 0 0 1 2.5 7.5 L5.5 7.5Z M2.5 7.5 A5 5 0 0 1 7.5 2.5 L7.5 5.5Z" fill="#2a70d0"/><circle cx="7.5" cy="7.5" r="2.4" fill="#2e2e36"/></svg>
<div class="c ex" style="left:474px;top:342.97px;font-size:8px;color:#222;">Inception</div>
<div class="c ex" style="left:474px;top:352.97px;font-size:8px;color:#222;">Animotion 30s</div>
<div class="c ex" style="left:474px;top:362.97px;font-size:8px;color:#222;">Mask</div>
<div class="c ex" style="left:557.3px;top:342.97px;font-size:8px;color:#222;">Inception</div>
<div class="c ex" style="left:557.3px;top:352.97px;font-size:8px;color:#222;">Animotion 30s</div>
<div class="c ex" style="left:640.6px;top:342.97px;font-size:8px;color:#222;">Inception</div>
<div class="c ex" style="left:640.6px;top:352.97px;font-size:8px;color:#222;">Animotion Mask</div>
<div class="c ex" style="left:723.8px;top:342.97px;font-size:8px;color:#222;">Inception</div>
<div class="c ex" style="left:723.8px;top:352.97px;font-size:8px;color:#222;">Animotion</div>
<div class="c ex" style="left:807.2px;top:342.97px;font-size:8px;color:#222;">Inception</div>
<svg class="a" style="left:453.9px;top:381px" width="40" height="58"><path d="M0 1h12l2 1h19v51H0Z" fill="#f6dc8e"/><path d="M11 3 L36 8 L36 52 L11 50Z" fill="#363232"/><path d="M17 22 Q23 19 28 27 Q22 33 17 28Z" fill="#d2c2b0"/><path d="M27 24 L32 17" stroke="#c8b8a8" stroke-width="1"/><path d="M0 1h11v52H0Z" fill="#f3d57c"/><path d="M11 1v52" stroke="#e6c25a" stroke-width=".6"/></svg>
<svg class="a" style="left:441.5px;top:425.5px" width="12" height="12"><rect x=".5" y=".5" width="11" height="11" fill="#fff" stroke="#b0b0b0" stroke-width=".8"/><path d="M3 9 Q3 4 8 4" fill="none" stroke="#2a6ad0" stroke-width="1.5"/><path d="M6 2l3 2-3 2Z" fill="#2a6ad0"/></svg>
<div class="c ex" style="left:474.4px;top:440.02px;font-size:8px;color:#222;">Renderings</div><div class="t" style="left:1047px;top:32px;font-size:28.5px;font-weight:normal;letter-spacing:1px;color:#dedede;-webkit-text-stroke:0.8px #dedede;text-shadow:0 0 1px #222">robodoll</div>
<svg class="a" style="left:1155px;top:18px" width="110" height="50"><g fill="#dcdcdc" stroke="#151515" stroke-width="1.1" stroke-linejoin="round"><path d="M8.2 6.4 L15.5 6.2 L17.7 31.8 Q35.4 32.5 34.4 40.5 Q32.4 45.8 18.5 46.0 L12.9 46.4Z"/><path d="M55.0 6.4 L62.3 6.2 L65.2 31.8 Q82.6 32.5 81.6 40.5 Q79.6 45.8 66.0 46.0 L60.0 46.4Z"/><path d="M33.0 17.6 L38.2 17.6 L38.2 25.0 L33.3 25.0Z"/><path d="M34.0 27.5 L40.4 27.5 L40.4 43.8 L34.4 43.8Z"/><path d="M39.5 10.3 L46.0 10.3 L46.5 43.0 L40.0 43.0Z"/><path d="M47.7 17.6 L53.3 17.6 L53.3 25.0 L48.0 25.0Z"/><path d="M48.5 27.5 L53.7 27.5 L53.7 44.5 L48.9 44.5Z"/><path d="M79.9 17.6 L85.9 17.6 L85.9 25.0 L80.2 25.0Z"/><path d="M80.8 27.5 L86.8 27.5 L86.8 44.0 L81.2 44.0Z"/><path d="M86.8 9.9 L93.0 9.9 L93.5 42.5 L87.3 42.5Z"/><path d="M94.5 17.6 L100.5 17.6 L100.5 25.0 L94.8 25.0Z"/><path d="M95.4 27.5 L101.4 27.5 L101.4 44.5 L95.8 44.5Z"/></g><path d="M19.8 36.0 L25.8 38.2 L19.8 40.4Z" fill="#1e1e1e"/><path d="M67.4 36.0 L73.0 38.5 L67.4 41.0Z" fill="#1e1e1e"/><path d="M35.6 18.5V24.5M50.5 18.5V24.5M82.9 18.5V24.5M97.5 18.5V24.5" stroke="#2a2a2a" stroke-width=".9"/></svg>

</body></html>
